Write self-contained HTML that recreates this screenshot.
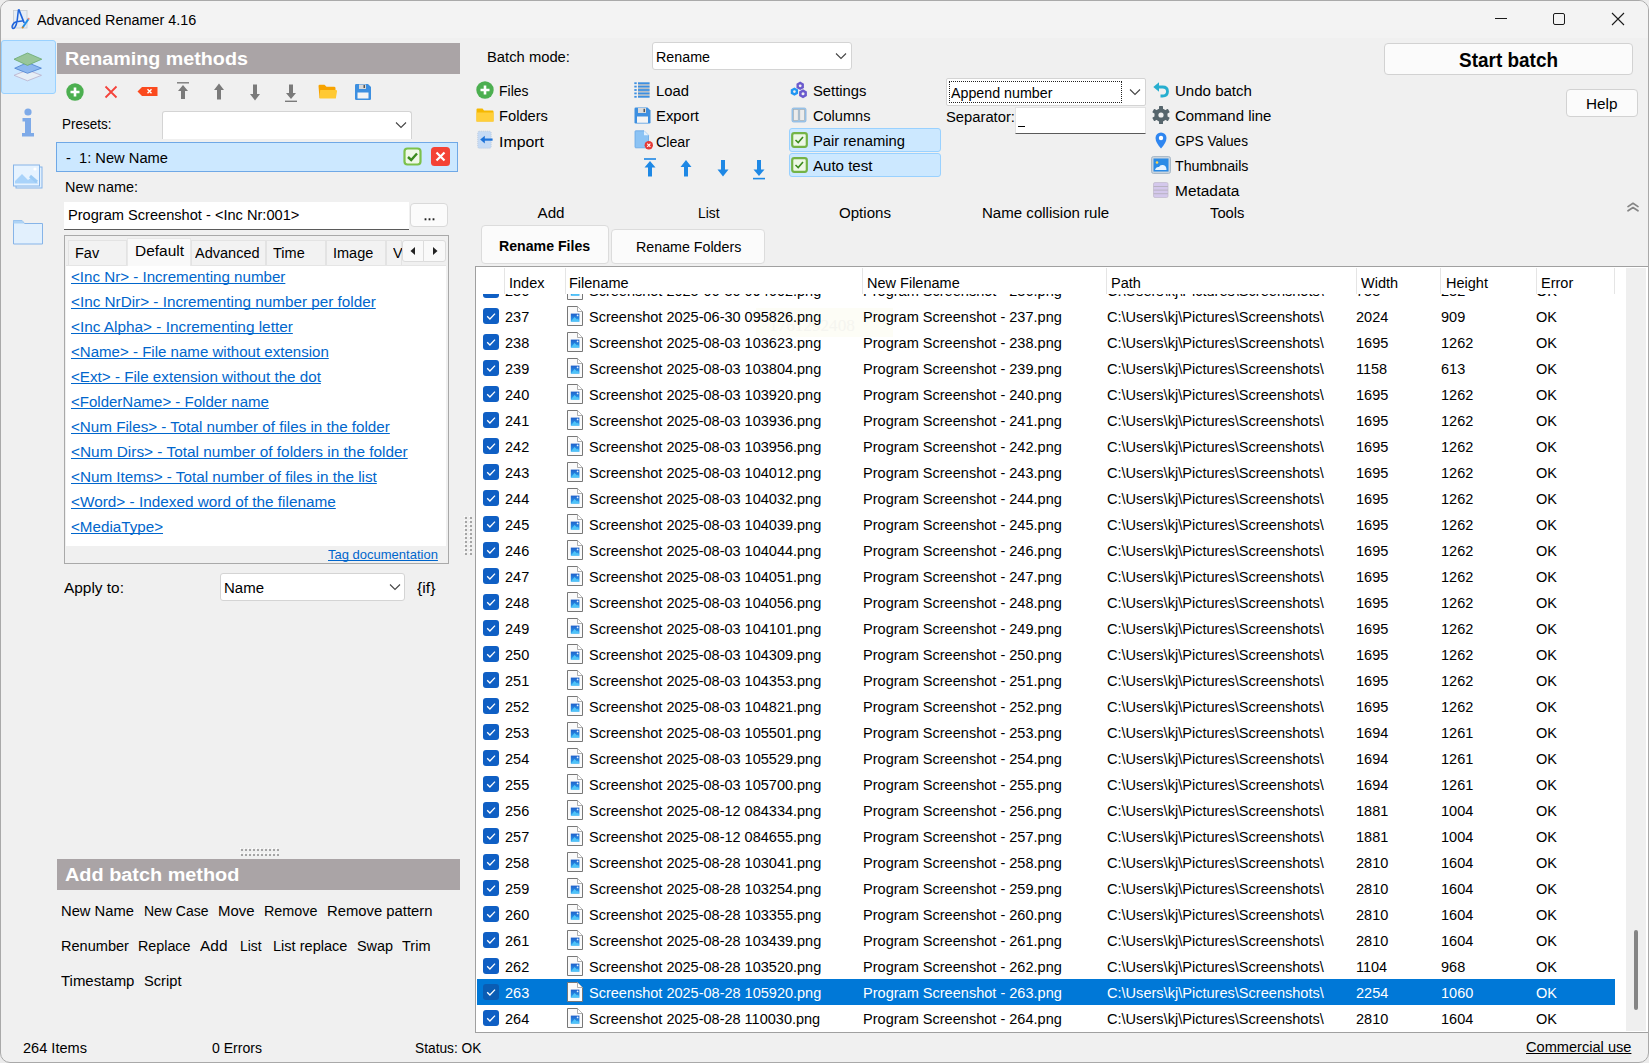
<!DOCTYPE html><html><head><meta charset="utf-8"><title>Advanced Renamer</title><style>
*{margin:0;padding:0;box-sizing:border-box}
html,body{width:1649px;height:1063px;overflow:hidden;background:#ececec}
body{font-family:"Liberation Sans",sans-serif;color:#000;position:relative}
.t{position:absolute;white-space:pre}
.b{position:absolute}
</style></head><body><div class="b" style="left:0px;top:0px;width:1649px;height:1063px;background:#f0f0f0;border:1px solid #a9a9a9;border-radius:10px;"></div>
<div class="b" style="left:1px;top:1px;width:1647px;height:37px;background:#f3f3f3;border-radius:9px 9px 0 0;"></div>
<svg class="b" style="left:6px;top:4px" width="30" height="30" viewBox="0 0 30 30"><rect x="7.5" y="6.5" width="13.5" height="17.5" fill="#e6edf5" stroke="#c9cfd6" stroke-width=".9"/><path d="M12.5 5.5 C11.8 10 11.6 14 11 17.5 C10.3 21.5 8.5 25 7 24.5 C5 23.8 6.2 18.5 11.5 17.6 C13.5 17.3 15.5 17.2 17.5 16.8" stroke="#1d63dc" stroke-width="1.5" fill="none"/><path d="M12.7 5.3 L18.2 19" stroke="#1d63dc" stroke-width="1.7" fill="none"/><path d="M16.8 23.3 L22.5 15" stroke="#1e8ee8" stroke-width="2" fill="none"/><circle cx="16.6" cy="23.6" r="1" fill="#d0891e"/><circle cx="22.6" cy="14.7" r="1" fill="#ef8a7a"/></svg>
<div class="t" style="left:37.00px;top:11.63px;font-size:15.200px;line-height:15.200px;transform:scaleX(0.9486);transform-origin:0 0;">Advanced Renamer 4.16</div>
<div class="b" style="left:1495px;top:18px;width:12px;height:1px;background:#1a1a1a"></div>
<div class="b" style="left:1553px;top:13px;width:12px;height:12px;border:1px solid #1a1a1a;border-radius:2px"></div>
<svg class="b" style="left:1611px;top:12px" width="14" height="14" viewBox="0 0 14 14"><path d="M1 1 L13 13 M13 1 L1 13" stroke="#1a1a1a" stroke-width="1.1"/></svg>
<div class="b" style="left:1px;top:40px;width:55px;height:54px;background:#cce8ff;border:1px solid #99d1ff;border-radius:3px"></div>
<svg class="b" style="left:13px;top:52px" width="30" height="30" viewBox="0 0 30 30"><path d="M1 23.3 L14.5 18 L28.5 23.3 L14.5 28.8Z" fill="#e6eef6" stroke="#b9b0cc" stroke-width=".8"/><path d="M1.7 16.2 L14.5 10.5 L28.4 16.2 L14.5 21.3Z" fill="#8db8ef" stroke="#4a7fcf" stroke-width=".8"/><path d="M1 7.2 L14.5 1 L28.8 7.2 L14.5 13.4Z" fill="#98c69a" stroke="#6aa86e" stroke-width=".8"/></svg>
<svg class="b" style="left:18px;top:106px" width="20" height="32" viewBox="0 0 20 32"><circle cx="10" cy="6" r="3.6" fill="#7eaae8"/><path d="M4.5 12 H13 V27 H16 V30.5 H4 V27 H7 V15.5 H4.5Z" fill="#7eaae8"/></svg>
<svg class="b" style="left:12px;top:164px" width="32" height="27" viewBox="0 0 32 27"><rect x="4" y="3" width="26" height="21" fill="#e2f0fd" stroke="#86b4e8" stroke-width="1"/><rect x="1.5" y="1" width="26" height="21" fill="#e6f3ff" stroke="#86b4e8" stroke-width="1"/><path d="M3 19.5 L3 17 L10 10 L16 16 L20 13 L26 19 V19.5Z" fill="#a9d3fa"/><path d="M18 12 L25 18" stroke="#9ccbf5" stroke-width="3"/><circle cx="23" cy="5" r="1.6" fill="#fff"/></svg>
<svg class="b" style="left:12px;top:219px" width="32" height="27" viewBox="0 0 32 27"><path d="M1.5 1.5 H10 L12.5 4.5 H30.5 V25 H1.5Z" fill="#e2f0fd" stroke="#86b4e8" stroke-width="1"/><path d="M1.5 1.5 H10 L12.5 4.5 H1.5Z" fill="#aed3f5"/></svg>
<div class="b" style="left:57px;top:43px;width:403px;height:31px;background:#aaa4a6"></div>
<div class="t" style="left:64.50px;top:49.67px;font-size:18.700px;line-height:18.700px;transform:scaleX(1.0547);transform-origin:0 0;color:#fff;font-weight:bold;">Renaming methods</div>
<svg class="b" style="left:66px;top:83px" width="18" height="18" viewBox="0 0 18 18"><circle cx="9" cy="9" r="8.7" fill="#4caf50"/><path d="M9 4.5 V13.5 M4.5 9 H13.5" stroke="#fff" stroke-width="2.6"/></svg>
<svg class="b" style="left:104px;top:85px" width="14" height="14" viewBox="0 0 14 14"><path d="M1.5 1.5 L12.5 12.5 M12.5 1.5 L1.5 12.5" stroke="#f4433b" stroke-width="1.8"/></svg>
<svg class="b" style="left:137px;top:86px" width="21" height="11" viewBox="0 0 21 11"><path d="M0.5 5.5 L5 1 H20.5 V10 H5Z" fill="#fb4a1e"/><path d="M10.5 3.3 L14.5 7.3 M14.5 3.3 L10.5 7.3" stroke="#fff" stroke-width="1.4"/></svg>
<svg class="b" style="left:176px;top:81px" width="14" height="20" viewBox="0 0 14 20"><path d="M1 1.8 H13" stroke="#7a7a7a" stroke-width="1.4"/><path d="M7 4 L12 10 H9 V18 H5 V10 H2Z" fill="#7a7a7a"/></svg>
<svg class="b" style="left:212px;top:82px" width="14" height="20" viewBox="0 0 14 20"><path d="M7 1.5 L12 8 H9 V17.5 H5 V8 H2Z" fill="#7a7a7a"/></svg>
<svg class="b" style="left:248px;top:82px" width="14" height="20" viewBox="0 0 14 20"><path d="M7 18.5 L12 12 H9 V2.5 H5 V12 H2Z" fill="#7a7a7a"/></svg>
<svg class="b" style="left:284px;top:82px" width="14" height="21" viewBox="0 0 14 21"><path d="M1 19.3 H13" stroke="#7a7a7a" stroke-width="1.4"/><path d="M7 17 L12 11 H9 V2.5 H5 V11 H2Z" fill="#7a7a7a"/></svg>
<svg class="b" style="left:318px;top:84px" width="20" height="16" viewBox="0 0 20 16"><path d="M0.5 2 Q0.5 0.8 1.8 0.8 H6.5 L8.5 2.8 H16 Q17.5 2.8 17.5 4 V14 H1.5Z" fill="#f7a300"/><path d="M2.2 6 H18 Q19.5 6 19 7.5 L17.8 14.5 H1.5Z" fill="#ffc933"/></svg>
<svg class="b" style="left:354px;top:83px" width="18" height="18" viewBox="0 0 18 18"><path d="M1 2.2 Q1 1 2.2 1 H14 L17 4 V15.8 Q17 17 15.8 17 H2.2 Q1 17 1 15.8Z" fill="#3d8fe0"/><rect x="5" y="1.5" width="7" height="4.5" fill="#d9d9d9"/><rect x="9.5" y="2" width="1.5" height="3" fill="#555"/><rect x="3.5" y="9.5" width="11" height="6" fill="#f4f4f4"/></svg>
<div class="t" style="left:62.00px;top:116.13px;font-size:15.200px;line-height:15.200px;transform:scaleX(0.8879);transform-origin:0 0;">Presets:</div>
<div class="b" style="left:162px;top:111px;width:250px;height:28px;background:#fff;border:1px solid #d4d4d4;border-bottom:none;border-radius:3px 3px 0 0"></div>
<svg class="b" style="left:395px;top:121px" width="12" height="8" viewBox="0 0 12 8"><path d="M1 1.5 L6 6.5 L11 1.5" stroke="#444" stroke-width="1.1" fill="none"/></svg>
<div class="b" style="left:56px;top:142px;width:402px;height:30px;background:#cce8ff;border:1px solid #6fa8e6"></div>
<div class="t" style="left:66.00px;top:150.13px;font-size:15.200px;line-height:15.200px;transform:scaleX(0.9661);transform-origin:0 0;">-  1: New Name</div>
<svg class="b" style="left:403px;top:147px" width="19" height="19" viewBox="0 0 19 19"><rect x="1.5" y="1.5" width="16" height="16" rx="3" fill="#f0f8e8" stroke="#7cc14a" stroke-width="2.2"/><path d="M5 10 L8.2 13 L14 6.5" stroke="#3b8a1e" stroke-width="2.4" fill="none"/></svg>
<svg class="b" style="left:431px;top:147px" width="19" height="19" viewBox="0 0 19 19"><rect x="0" y="0" width="19" height="19" rx="3.5" fill="#f44336"/><path d="M5.5 5.5 L13.5 13.5 M13.5 5.5 L5.5 13.5" stroke="#fff" stroke-width="2.2"/></svg>
<div class="t" style="left:64.50px;top:178.93px;font-size:15.200px;line-height:15.200px;transform:scaleX(0.9496);transform-origin:0 0;">New name:</div>
<div class="b" style="left:64px;top:202px;width:345px;height:28px;background:#fff;border-bottom:1.5px solid #5a5a5a"></div>
<div class="t" style="left:67.50px;top:207.43px;font-size:15.200px;line-height:15.200px;transform:scaleX(0.9615);transform-origin:0 0;">Program Screenshot - &lt;Inc Nr:001&gt;</div>
<div class="b" style="left:410px;top:203px;width:38px;height:24px;background:#fbfbfb;border:1px solid #d9d9d9;border-radius:4px"></div>
<svg class="b" style="left:424px;top:218px" width="12" height="3" viewBox="0 0 12 3"><rect x="0.6" y="0.3" width="1.8" height="2" fill="#222"/><rect x="4.6" y="0.3" width="1.8" height="2" fill="#222"/><rect x="8.6" y="0.3" width="1.8" height="2" fill="#222"/></svg>
<div class="b" style="left:64px;top:235px;width:385px;height:329px;border:1px solid #a9a9a9"></div>
<div class="b" style="left:66px;top:265px;width:380px;height:281px;background:#fff;border-top:1px solid #e5e5e5"></div>
<div class="b" style="left:68px;top:240px;width:59px;height:25px;background:#f2f2f2;border:1px solid #e3e3e3;border-bottom:none"></div>
<div class="t" style="left:74.50px;top:244.83px;font-size:15.200px;line-height:15.200px;transform:scaleX(0.9550);transform-origin:0 0;">Fav</div>
<div class="b" style="left:127px;top:238px;width:64px;height:28px;background:#f9f9f9;border:1px solid #e8e8e8;border-bottom:none"></div>
<div class="t" style="left:134.60px;top:242.83px;font-size:15.200px;line-height:15.200px;transform:scaleX(1.0175);transform-origin:0 0;">Default</div>
<div class="b" style="left:191px;top:240px;width:75px;height:25px;background:#f2f2f2;border:1px solid #e3e3e3;border-bottom:none"></div>
<div class="t" style="left:195.20px;top:244.83px;font-size:15.200px;line-height:15.200px;transform:scaleX(0.9550);transform-origin:0 0;">Advanced</div>
<div class="b" style="left:266px;top:240px;width:60px;height:25px;background:#f2f2f2;border:1px solid #e3e3e3;border-bottom:none"></div>
<div class="t" style="left:273.10px;top:244.83px;font-size:15.200px;line-height:15.200px;transform:scaleX(0.9550);transform-origin:0 0;">Time</div>
<div class="b" style="left:326px;top:240px;width:60px;height:25px;background:#f2f2f2;border:1px solid #e3e3e3;border-bottom:none"></div>
<div class="t" style="left:333.40px;top:244.83px;font-size:15.200px;line-height:15.200px;transform:scaleX(0.9550);transform-origin:0 0;">Image</div>
<div class="b" style="left:386px;top:240px;width:16px;height:25px;background:#f2f2f2;border:1px solid #e3e3e3;border-bottom:none"></div>
<div class="b" style="left:386px;top:240px;width:16px;height:25px;overflow:hidden">
<div class="t" style="left:6.80px;top:4.83px;font-size:15.200px;line-height:15.200px;transform:scaleX(0.9550);transform-origin:0 0;">V</div>
</div>
<div class="b" style="left:402px;top:240px;width:22px;height:22px;background:#f9f9f9;border:1px solid #dcdcdc;border-radius:3px 0 0 3px"></div>
<div class="b" style="left:423px;top:240px;width:23px;height:22px;background:#f9f9f9;border:1px solid #dcdcdc;border-radius:0 3px 3px 0"></div>
<svg class="b" style="left:409px;top:246px" width="8" height="10" viewBox="0 0 8 10"><path d="M6 1 V9 L1.5 5Z" fill="#222"/></svg>
<svg class="b" style="left:431px;top:246px" width="8" height="10" viewBox="0 0 8 10"><path d="M2 1 V9 L6.5 5Z" fill="#222"/></svg>
<div class="t" style="left:71.00px;top:268.63px;font-size:15.200px;line-height:15.200px;transform:scaleX(0.9958);transform-origin:0 0;color:#0066cc;text-decoration:underline;text-underline-offset:1px;text-decoration-skip-ink:none">&lt;Inc Nr&gt; - Incrementing number</div>
<div class="t" style="left:71.00px;top:293.63px;font-size:15.200px;line-height:15.200px;transform:scaleX(1.0057);transform-origin:0 0;color:#0066cc;text-decoration:underline;text-underline-offset:1px;text-decoration-skip-ink:none">&lt;Inc NrDir&gt; - Incrementing number per folder</div>
<div class="t" style="left:71.00px;top:318.63px;font-size:15.200px;line-height:15.200px;transform:scaleX(1.0106);transform-origin:0 0;color:#0066cc;text-decoration:underline;text-underline-offset:1px;text-decoration-skip-ink:none">&lt;Inc Alpha&gt; - Incrementing letter</div>
<div class="t" style="left:71.00px;top:343.63px;font-size:15.200px;line-height:15.200px;transform:scaleX(0.9915);transform-origin:0 0;color:#0066cc;text-decoration:underline;text-underline-offset:1px;text-decoration-skip-ink:none">&lt;Name&gt; - File name without extension</div>
<div class="t" style="left:71.00px;top:368.63px;font-size:15.200px;line-height:15.200px;color:#0066cc;text-decoration:underline;text-underline-offset:1px;text-decoration-skip-ink:none">&lt;Ext&gt; - File extension without the dot</div>
<div class="t" style="left:71.00px;top:393.63px;font-size:15.200px;line-height:15.200px;transform:scaleX(0.9890);transform-origin:0 0;color:#0066cc;text-decoration:underline;text-underline-offset:1px;text-decoration-skip-ink:none">&lt;FolderName&gt; - Folder name</div>
<div class="t" style="left:71.00px;top:418.63px;font-size:15.200px;line-height:15.200px;color:#0066cc;text-decoration:underline;text-underline-offset:1px;text-decoration-skip-ink:none">&lt;Num Files&gt; - Total number of files in the folder</div>
<div class="t" style="left:71.00px;top:443.63px;font-size:15.200px;line-height:15.200px;transform:scaleX(1.0133);transform-origin:0 0;color:#0066cc;text-decoration:underline;text-underline-offset:1px;text-decoration-skip-ink:none">&lt;Num Dirs&gt; - Total number of folders in the folder</div>
<div class="t" style="left:71.00px;top:468.63px;font-size:15.200px;line-height:15.200px;transform:scaleX(1.0044);transform-origin:0 0;color:#0066cc;text-decoration:underline;text-underline-offset:1px;text-decoration-skip-ink:none">&lt;Num Items&gt; - Total number of files in the list</div>
<div class="t" style="left:71.00px;top:493.63px;font-size:15.200px;line-height:15.200px;transform:scaleX(1.0096);transform-origin:0 0;color:#0066cc;text-decoration:underline;text-underline-offset:1px;text-decoration-skip-ink:none">&lt;Word&gt; - Indexed word of the filename</div>
<div class="t" style="left:71.00px;top:518.63px;font-size:15.200px;line-height:15.200px;color:#0066cc;text-decoration:underline;text-underline-offset:1px;text-decoration-skip-ink:none">&lt;MediaType&gt;</div>
<div class="t" style="left:328.00px;top:549.15px;font-size:12.700px;line-height:12.700px;transform:scaleX(1.0251);transform-origin:0 0;color:#0066cc;text-decoration:underline;text-decoration-skip-ink:none">Tag documentation</div>
<div class="t" style="left:64.20px;top:580.13px;font-size:15.200px;line-height:15.200px;transform:scaleX(1.0145);transform-origin:0 0;">Apply to:</div>
<div class="b" style="left:220px;top:573px;width:185px;height:28px;background:#fff;border:1px solid #d4d4d4;border-radius:3px"></div>
<div class="t" style="left:224.00px;top:580.13px;font-size:15.200px;line-height:15.200px;transform:scaleX(0.9866);transform-origin:0 0;">Name</div>
<svg class="b" style="left:389px;top:583px" width="12" height="8" viewBox="0 0 12 8"><path d="M1 1.5 L6 6.5 L11 1.5" stroke="#444" stroke-width="1.1" fill="none"/></svg>
<div class="t" style="left:417.20px;top:580.13px;font-size:15.200px;line-height:15.200px;transform:scaleX(1.0419);transform-origin:0 0;">{if}</div>
<svg class="b" style="left:464px;top:516px" width="9" height="40" viewBox="0 0 9 40"><rect x="1" y="1" width="2" height="2" fill="#a5a5a5"/><rect x="0" y="0" width="1" height="1" fill="#fff"/><rect x="1" y="5" width="2" height="2" fill="#a5a5a5"/><rect x="0" y="4" width="1" height="1" fill="#fff"/><rect x="1" y="9" width="2" height="2" fill="#a5a5a5"/><rect x="0" y="8" width="1" height="1" fill="#fff"/><rect x="1" y="13" width="2" height="2" fill="#a5a5a5"/><rect x="0" y="12" width="1" height="1" fill="#fff"/><rect x="1" y="17" width="2" height="2" fill="#a5a5a5"/><rect x="0" y="16" width="1" height="1" fill="#fff"/><rect x="1" y="21" width="2" height="2" fill="#a5a5a5"/><rect x="0" y="20" width="1" height="1" fill="#fff"/><rect x="1" y="25" width="2" height="2" fill="#a5a5a5"/><rect x="0" y="24" width="1" height="1" fill="#fff"/><rect x="1" y="29" width="2" height="2" fill="#a5a5a5"/><rect x="0" y="28" width="1" height="1" fill="#fff"/><rect x="1" y="33" width="2" height="2" fill="#a5a5a5"/><rect x="0" y="32" width="1" height="1" fill="#fff"/><rect x="1" y="37" width="2" height="2" fill="#a5a5a5"/><rect x="0" y="36" width="1" height="1" fill="#fff"/><rect x="6" y="1" width="2" height="2" fill="#a5a5a5"/><rect x="5" y="0" width="1" height="1" fill="#fff"/><rect x="6" y="5" width="2" height="2" fill="#a5a5a5"/><rect x="5" y="4" width="1" height="1" fill="#fff"/><rect x="6" y="9" width="2" height="2" fill="#a5a5a5"/><rect x="5" y="8" width="1" height="1" fill="#fff"/><rect x="6" y="13" width="2" height="2" fill="#a5a5a5"/><rect x="5" y="12" width="1" height="1" fill="#fff"/><rect x="6" y="17" width="2" height="2" fill="#a5a5a5"/><rect x="5" y="16" width="1" height="1" fill="#fff"/><rect x="6" y="21" width="2" height="2" fill="#a5a5a5"/><rect x="5" y="20" width="1" height="1" fill="#fff"/><rect x="6" y="25" width="2" height="2" fill="#a5a5a5"/><rect x="5" y="24" width="1" height="1" fill="#fff"/><rect x="6" y="29" width="2" height="2" fill="#a5a5a5"/><rect x="5" y="28" width="1" height="1" fill="#fff"/><rect x="6" y="33" width="2" height="2" fill="#a5a5a5"/><rect x="5" y="32" width="1" height="1" fill="#fff"/><rect x="6" y="37" width="2" height="2" fill="#a5a5a5"/><rect x="5" y="36" width="1" height="1" fill="#fff"/></svg>
<svg class="b" style="left:240px;top:848px" width="42" height="9" viewBox="0 0 42 9"><rect x="1" y="1" width="2" height="2" fill="#a5a5a5"/><rect x="0" y="0" width="1" height="1" fill="#fff"/><rect x="1" y="6" width="2" height="2" fill="#a5a5a5"/><rect x="0" y="5" width="1" height="1" fill="#fff"/><rect x="5" y="1" width="2" height="2" fill="#a5a5a5"/><rect x="4" y="0" width="1" height="1" fill="#fff"/><rect x="5" y="6" width="2" height="2" fill="#a5a5a5"/><rect x="4" y="5" width="1" height="1" fill="#fff"/><rect x="9" y="1" width="2" height="2" fill="#a5a5a5"/><rect x="8" y="0" width="1" height="1" fill="#fff"/><rect x="9" y="6" width="2" height="2" fill="#a5a5a5"/><rect x="8" y="5" width="1" height="1" fill="#fff"/><rect x="13" y="1" width="2" height="2" fill="#a5a5a5"/><rect x="12" y="0" width="1" height="1" fill="#fff"/><rect x="13" y="6" width="2" height="2" fill="#a5a5a5"/><rect x="12" y="5" width="1" height="1" fill="#fff"/><rect x="17" y="1" width="2" height="2" fill="#a5a5a5"/><rect x="16" y="0" width="1" height="1" fill="#fff"/><rect x="17" y="6" width="2" height="2" fill="#a5a5a5"/><rect x="16" y="5" width="1" height="1" fill="#fff"/><rect x="21" y="1" width="2" height="2" fill="#a5a5a5"/><rect x="20" y="0" width="1" height="1" fill="#fff"/><rect x="21" y="6" width="2" height="2" fill="#a5a5a5"/><rect x="20" y="5" width="1" height="1" fill="#fff"/><rect x="25" y="1" width="2" height="2" fill="#a5a5a5"/><rect x="24" y="0" width="1" height="1" fill="#fff"/><rect x="25" y="6" width="2" height="2" fill="#a5a5a5"/><rect x="24" y="5" width="1" height="1" fill="#fff"/><rect x="29" y="1" width="2" height="2" fill="#a5a5a5"/><rect x="28" y="0" width="1" height="1" fill="#fff"/><rect x="29" y="6" width="2" height="2" fill="#a5a5a5"/><rect x="28" y="5" width="1" height="1" fill="#fff"/><rect x="33" y="1" width="2" height="2" fill="#a5a5a5"/><rect x="32" y="0" width="1" height="1" fill="#fff"/><rect x="33" y="6" width="2" height="2" fill="#a5a5a5"/><rect x="32" y="5" width="1" height="1" fill="#fff"/><rect x="37" y="1" width="2" height="2" fill="#a5a5a5"/><rect x="36" y="0" width="1" height="1" fill="#fff"/><rect x="37" y="6" width="2" height="2" fill="#a5a5a5"/><rect x="36" y="5" width="1" height="1" fill="#fff"/></svg>
<div class="b" style="left:57px;top:859px;width:403px;height:31px;background:#aaa4a6"></div>
<div class="t" style="left:64.50px;top:865.87px;font-size:18.700px;line-height:18.700px;transform:scaleX(1.0632);transform-origin:0 0;color:#fff;font-weight:bold;">Add batch method</div>
<div class="t" style="left:61.30px;top:902.93px;font-size:15.200px;line-height:15.200px;transform:scaleX(0.9711);transform-origin:0 0;">New Name</div>
<div class="t" style="left:143.90px;top:902.93px;font-size:15.200px;line-height:15.200px;transform:scaleX(0.9200);transform-origin:0 0;">New Case</div>
<div class="t" style="left:218.00px;top:902.93px;font-size:15.200px;line-height:15.200px;transform:scaleX(0.9821);transform-origin:0 0;">Move</div>
<div class="t" style="left:264.20px;top:902.93px;font-size:15.200px;line-height:15.200px;transform:scaleX(0.9453);transform-origin:0 0;">Remove</div>
<div class="t" style="left:327.20px;top:902.93px;font-size:15.200px;line-height:15.200px;transform:scaleX(0.9756);transform-origin:0 0;">Remove pattern</div>
<div class="t" style="left:61.30px;top:937.93px;font-size:15.200px;line-height:15.200px;transform:scaleX(0.9583);transform-origin:0 0;">Renumber</div>
<div class="t" style="left:138.20px;top:937.93px;font-size:15.200px;line-height:15.200px;transform:scaleX(0.9415);transform-origin:0 0;">Replace</div>
<div class="t" style="left:200.00px;top:937.93px;font-size:15.200px;line-height:15.200px;transform:scaleX(1.0169);transform-origin:0 0;">Add</div>
<div class="t" style="left:240.20px;top:937.93px;font-size:15.200px;line-height:15.200px;transform:scaleX(0.9090);transform-origin:0 0;">List</div>
<div class="t" style="left:273.00px;top:937.93px;font-size:15.200px;line-height:15.200px;transform:scaleX(0.9585);transform-origin:0 0;">List replace</div>
<div class="t" style="left:357.00px;top:937.93px;font-size:15.200px;line-height:15.200px;transform:scaleX(0.9468);transform-origin:0 0;">Swap</div>
<div class="t" style="left:401.80px;top:937.93px;font-size:15.200px;line-height:15.200px;transform:scaleX(0.9557);transform-origin:0 0;">Trim</div>
<div class="t" style="left:61.30px;top:972.93px;font-size:15.200px;line-height:15.200px;transform:scaleX(0.9852);transform-origin:0 0;">Timestamp</div>
<div class="t" style="left:143.90px;top:972.93px;font-size:15.200px;line-height:15.200px;transform:scaleX(0.9652);transform-origin:0 0;">Script</div>
<div class="t" style="left:22.80px;top:1040.13px;font-size:15.200px;line-height:15.200px;transform:scaleX(0.9589);transform-origin:0 0;">264 Items</div>
<div class="t" style="left:212.30px;top:1040.13px;font-size:15.200px;line-height:15.200px;transform:scaleX(0.9251);transform-origin:0 0;">0 Errors</div>
<div class="t" style="left:414.60px;top:1040.13px;font-size:15.200px;line-height:15.200px;transform:scaleX(0.9048);transform-origin:0 0;">Status: OK</div>
<div class="t" style="left:1526.00px;top:1039.33px;font-size:15.200px;line-height:15.200px;transform:scaleX(0.9608);transform-origin:0 0;text-decoration:underline;text-decoration-skip-ink:none">Commercial use</div>
<div class="t" style="left:486.50px;top:48.63px;font-size:15.200px;line-height:15.200px;transform:scaleX(0.9727);transform-origin:0 0;">Batch mode:</div>
<div class="b" style="left:652px;top:42px;width:200px;height:28px;background:#fff;border:1px solid #d4d4d4;border-radius:3px"></div>
<div class="t" style="left:656.30px;top:48.63px;font-size:15.200px;line-height:15.200px;transform:scaleX(0.9400);transform-origin:0 0;">Rename</div>
<svg class="b" style="left:835px;top:52px" width="12" height="8" viewBox="0 0 12 8"><path d="M1 1.5 L6 6.5 L11 1.5" stroke="#444" stroke-width="1.1" fill="none"/></svg>
<svg class="b" style="left:476px;top:81px" width="18" height="18" viewBox="0 0 18 18"><circle cx="9" cy="9" r="8.7" fill="#4caf50"/><path d="M9 4.5 V13.5 M4.5 9 H13.5" stroke="#fff" stroke-width="2.6"/></svg>
<div class="t" style="left:499.10px;top:82.53px;font-size:15.200px;line-height:15.200px;transform:scaleX(0.9193);transform-origin:0 0;">Files</div>
<svg class="b" style="left:476px;top:108px" width="18" height="14" viewBox="0 0 18 14"><path d="M0.5 1.5 Q0.5 0.5 1.5 0.5 H6.5 L8 2.5 H16.5 Q17.5 2.5 17.5 3.5 V13.5 H0.5Z" fill="#f5b800"/><path d="M0.5 4.5 H17.5 V13.5 H0.5Z" fill="#ffcf3a"/></svg>
<div class="t" style="left:499.10px;top:108.13px;font-size:15.200px;line-height:15.200px;transform:scaleX(0.9668);transform-origin:0 0;">Folders</div>
<svg class="b" style="left:476px;top:130px" width="18" height="20" viewBox="0 0 18 20"><rect x="1.7" y="1.2" width="13.5" height="17" rx="1.5" fill="#c6dbf5" stroke="#aebfd3" stroke-width=".6" stroke-dasharray="1 1"/><path d="M16.6 9.6 H7" stroke="#1e73d9" stroke-width="2.2"/><path d="M4.2 9.6 L8.8 5.8 V13.4Z" fill="#1e73d9"/></svg>
<div class="t" style="left:499.10px;top:133.53px;font-size:15.200px;line-height:15.200px;transform:scaleX(1.0447);transform-origin:0 0;">Import</div>
<svg class="b" style="left:634px;top:82px" width="17" height="16" viewBox="0 0 17 16"><rect x="4" y="2.0" width="11.6" height="1.7" fill="#b9bec4"/><rect x="4" y="5.4" width="11.6" height="1.7" fill="#b9bec4"/><rect x="4" y="8.8" width="11.6" height="1.7" fill="#b9bec4"/><rect x="4" y="12.2" width="11.6" height="1.7" fill="#b9bec4"/><rect x="0.3" y="0.3" width="2.4" height="1.8" fill="#3d8fe0"/><rect x="4" y="0.3" width="11.6" height="1.8" fill="#3d8fe0"/><rect x="0.3" y="3.7" width="2.4" height="1.8" fill="#3d8fe0"/><rect x="4" y="3.7" width="11.6" height="1.8" fill="#3d8fe0"/><rect x="0.3" y="7.1" width="2.4" height="1.8" fill="#3d8fe0"/><rect x="4" y="7.1" width="11.6" height="1.8" fill="#3d8fe0"/><rect x="0.3" y="10.5" width="2.4" height="1.8" fill="#3d8fe0"/><rect x="4" y="10.5" width="11.6" height="1.8" fill="#3d8fe0"/><rect x="0.3" y="13.9" width="2.4" height="1.8" fill="#3d8fe0"/><rect x="4" y="13.9" width="11.6" height="1.8" fill="#3d8fe0"/></svg>
<div class="t" style="left:656.30px;top:82.53px;font-size:15.200px;line-height:15.200px;transform:scaleX(0.9760);transform-origin:0 0;">Load</div>
<svg class="b" style="left:634px;top:107px" width="17" height="17" viewBox="0 0 17 17"><path d="M0.5 1.8 Q0.5 0.5 1.8 0.5 H13.5 L16.5 3.5 V15.2 Q16.5 16.5 15.2 16.5 H1.8 Q0.5 16.5 0.5 15.2Z" fill="#3d8fe0"/><rect x="4" y="1" width="8" height="5" fill="#dcdcdc"/><rect x="9.5" y="1.8" width="1.5" height="3.3" fill="#555"/><rect x="3" y="9.5" width="11" height="6.3" fill="#f4f4f4"/></svg>
<div class="t" style="left:656.30px;top:108.13px;font-size:15.200px;line-height:15.200px;transform:scaleX(0.9789);transform-origin:0 0;">Export</div>
<svg class="b" style="left:634px;top:130px" width="20" height="20" viewBox="0 0 20 20"><path d="M1 1.5 Q1 0.8 1.7 0.8 H10 L14.5 5.3 V17 Q14.5 17.8 13.8 17.8 H1.7 Q1 17.8 1 17Z" fill="#8cc3f4" stroke="#64a6e6" stroke-width=".8"/><path d="M10 0.8 V5.3 H14.5" fill="#e5f1fd"/><circle cx="14.8" cy="15.2" r="4.2" fill="#e53935"/><path d="M13.2 13.6 L16.4 16.8 M16.4 13.6 L13.2 16.8" stroke="#fff" stroke-width="1.1"/></svg>
<div class="t" style="left:656.30px;top:133.53px;font-size:15.200px;line-height:15.200px;transform:scaleX(0.9361);transform-origin:0 0;">Clear</div>
<svg class="b" style="left:643px;top:158px" width="14" height="20" viewBox="0 0 14 20"><path d="M1 1 H13" stroke="#1e88e5" stroke-width="1.6"/><path d="M7 3 L12.5 9.5 H9 V18.5 H5 V9.5 H1.5Z" fill="#1e88e5"/></svg>
<svg class="b" style="left:680px;top:159px" width="12" height="18" viewBox="0 0 12 18"><path d="M6 1 L11.5 8 H8 V17.5 H4 V8 H0.5Z" fill="#1e88e5"/></svg>
<svg class="b" style="left:717px;top:159px" width="12" height="18" viewBox="0 0 12 18"><path d="M6 17.5 L11.5 10.5 H8 V1 H4 V10.5 H0.5Z" fill="#1e88e5"/></svg>
<svg class="b" style="left:752px;top:159px" width="14" height="21" viewBox="0 0 14 21"><path d="M1 19.6 H13" stroke="#1e88e5" stroke-width="1.6"/><path d="M7 17 L12.5 10.5 H9 V1 H5 V10.5 H1.5Z" fill="#1e88e5"/></svg>
<svg class="b" style="left:784px;top:78px" width="26" height="24" viewBox="0 0 26 24"><path d="M10.40 17.80 L6.76 15.70 L6.76 11.50 L10.40 9.40 L14.04 11.50 L14.04 15.70Z" fill="#2196f3"/><circle cx="10.4" cy="13.6" r="1.3" fill="#f0f0f0"/><path d="M16.20 12.10 L12.48 9.95 L12.48 5.65 L16.20 3.50 L19.92 5.65 L19.92 9.95Z" fill="#6a5acd"/><circle cx="16.2" cy="7.8" r="1.4" fill="#f0f0f0"/><path d="M19.00 20.30 L15.10 18.05 L15.10 13.55 L19.00 11.30 L22.90 13.55 L22.90 18.05Z" fill="#6a5acd"/><circle cx="19" cy="15.8" r="1.5" fill="#f0f0f0"/></svg>
<div class="t" style="left:813.20px;top:82.53px;font-size:15.200px;line-height:15.200px;transform:scaleX(0.9742);transform-origin:0 0;">Settings</div>
<svg class="b" style="left:791px;top:107px" width="16" height="16" viewBox="0 0 16 16"><rect x="1" y="1" width="14" height="14" rx="1.5" fill="#9ccbf3" stroke="#8ab3d9" stroke-width=".8"/><rect x="2.6" y="2.6" width="4.6" height="10.8" fill="#ececec" stroke="#a9a9a9" stroke-width=".6"/><rect x="8.8" y="2.6" width="4.6" height="10.8" fill="#ececec" stroke="#a9a9a9" stroke-width=".6"/></svg>
<div class="t" style="left:813.20px;top:108.13px;font-size:15.200px;line-height:15.200px;transform:scaleX(0.9588);transform-origin:0 0;">Columns</div>
<div class="b" style="left:789px;top:128px;width:152px;height:24px;background:#cce8ff;border:1px solid #99d1ff;border-radius:3px"></div>
<svg class="b" style="left:791px;top:132px" width="17" height="16" viewBox="0 0 17 16"><rect x="1.2" y="1.2" width="14.6" height="13.6" rx="2" fill="#eef7e6" stroke="#74b346" stroke-width="2.2"/><path d="M4.5 8 L7.2 10.5 L12 5" stroke="#3b8a1e" stroke-width="1.6" fill="none"/></svg>
<div class="t" style="left:813.40px;top:132.93px;font-size:15.200px;line-height:15.200px;transform:scaleX(0.9724);transform-origin:0 0;">Pair renaming</div>
<div class="b" style="left:789px;top:153px;width:152px;height:24px;background:#cce8ff;border:1px solid #99d1ff;border-radius:3px"></div>
<svg class="b" style="left:791px;top:157px" width="17" height="16" viewBox="0 0 17 16"><rect x="1.2" y="1.2" width="14.6" height="13.6" rx="2" fill="#eef7e6" stroke="#74b346" stroke-width="2.2"/><path d="M4.5 8 L7.2 10.5 L12 5" stroke="#3b8a1e" stroke-width="1.6" fill="none"/></svg>
<div class="t" style="left:813.40px;top:157.93px;font-size:15.200px;line-height:15.200px;transform:scaleX(0.9919);transform-origin:0 0;">Auto test</div>
<div class="b" style="left:946px;top:78px;width:200px;height:28px;background:#fff;border:1px solid #d4d4d4;border-radius:2px"></div>
<div class="b" style="left:949px;top:81px;width:173px;height:22px;border:1px dotted #222"></div>
<div class="t" style="left:950.60px;top:84.63px;font-size:15.200px;line-height:15.200px;transform:scaleX(0.9384);transform-origin:0 0;">Append number</div>
<svg class="b" style="left:1129px;top:88px" width="12" height="8" viewBox="0 0 12 8"><path d="M1 1.5 L6 6.5 L11 1.5" stroke="#444" stroke-width="1.1" fill="none"/></svg>
<div class="t" style="left:946.30px;top:108.63px;font-size:15.200px;line-height:15.200px;transform:scaleX(0.9722);transform-origin:0 0;">Separator:</div>
<div class="b" style="left:1015px;top:107px;width:131px;height:27px;background:#fff;border:1px solid #e3e3e3;border-bottom:1.5px solid #5a5a5a"></div>
<div class="b" style="left:1018px;top:126px;width:7px;height:1.3px;background:#000"></div>
<svg class="b" style="left:1153px;top:82px" width="17" height="16" viewBox="0 0 17 16"><path d="M4 5 H9.5 Q14.5 5 14.5 9.5 Q14.5 14 9.5 14 H7.5" stroke="#27aecf" stroke-width="2.8" fill="none"/><path d="M0.3 5 L6 0.3 V9.7Z" fill="#27aecf"/></svg>
<div class="t" style="left:1175.40px;top:83.33px;font-size:15.200px;line-height:15.200px;transform:scaleX(0.9905);transform-origin:0 0;">Undo batch</div>
<svg class="b" style="left:1151px;top:106px" width="20" height="18" viewBox="0 0 20 18"><g transform="translate(10,9)"><circle r="6.6" fill="#56656c"/><rect x="-2" y="-9" width="4" height="4" rx=".6" fill="#56656c" transform="rotate(0)"/><rect x="-2" y="-9" width="4" height="4" rx=".6" fill="#56656c" transform="rotate(60)"/><rect x="-2" y="-9" width="4" height="4" rx=".6" fill="#56656c" transform="rotate(120)"/><rect x="-2" y="-9" width="4" height="4" rx=".6" fill="#56656c" transform="rotate(180)"/><rect x="-2" y="-9" width="4" height="4" rx=".6" fill="#56656c" transform="rotate(240)"/><rect x="-2" y="-9" width="4" height="4" rx=".6" fill="#56656c" transform="rotate(300)"/><circle r="2.6" fill="#f0f0f0"/></g></svg>
<div class="t" style="left:1175.40px;top:108.03px;font-size:15.200px;line-height:15.200px;transform:scaleX(0.9848);transform-origin:0 0;">Command line</div>
<svg class="b" style="left:1155px;top:132px" width="12" height="17" viewBox="0 0 12 17"><path d="M6 16.5 C3 13 0.5 9.5 0.5 6 A5.5 5.5 0 0 1 11.5 6 C11.5 9.5 9 13 6 16.5Z" fill="#2f86f0"/><circle cx="6" cy="6" r="2.2" fill="#fff"/></svg>
<div class="t" style="left:1175.40px;top:132.73px;font-size:15.200px;line-height:15.200px;transform:scaleX(0.8939);transform-origin:0 0;">GPS Values</div>
<svg class="b" style="left:1151px;top:156px" width="20" height="18" viewBox="0 0 20 18"><rect x="0.5" y="0.5" width="19" height="17" rx="2" fill="#c9d3dd" stroke="#9db0c2" stroke-width=".8"/><rect x="2.5" y="2.5" width="15" height="13" fill="#2b8be6"/><circle cx="6" cy="6.5" r="1.3" fill="#ffd54f"/><path d="M4 14 Q5 10.5 8 11 Q9 8.5 12 9 Q15.5 9.5 15.5 14Z" fill="#e6f3ff"/></svg>
<div class="t" style="left:1175.40px;top:157.63px;font-size:15.200px;line-height:15.200px;transform:scaleX(0.9356);transform-origin:0 0;">Thumbnails</div>
<svg class="b" style="left:1153px;top:182px" width="16" height="16" viewBox="0 0 16 16"><rect x="0.5" y="0.5" width="14.5" height="15" rx="1.5" fill="#d4c8ec" stroke="#c4bccf" stroke-width=".8"/><rect x="0.5" y="4" width="14.5" height="1" fill="#b8b2c2"/><rect x="0.5" y="7.6" width="14.5" height="1" fill="#b8b2c2"/><rect x="0.5" y="11.2" width="14.5" height="1" fill="#b8b2c2"/></svg>
<div class="t" style="left:1175.40px;top:182.73px;font-size:15.200px;line-height:15.200px;transform:scaleX(1.0178);transform-origin:0 0;">Metadata</div>
<div class="t" style="left:537.50px;top:205.13px;font-size:15.200px;line-height:15.200px;">Add</div>
<div class="t" style="left:697.50px;top:205.13px;font-size:15.200px;line-height:15.200px;transform:scaleX(0.9090);transform-origin:0 0;">List</div>
<div class="t" style="left:839.20px;top:205.13px;font-size:15.200px;line-height:15.200px;transform:scaleX(0.9927);transform-origin:0 0;">Options</div>
<div class="t" style="left:982.20px;top:204.83px;font-size:15.200px;line-height:15.200px;transform:scaleX(0.9914);transform-origin:0 0;">Name collision rule</div>
<div class="t" style="left:1209.70px;top:204.83px;font-size:15.200px;line-height:15.200px;transform:scaleX(0.9723);transform-origin:0 0;">Tools</div>
<svg class="b" style="left:1626px;top:200px" width="14" height="14" viewBox="0 0 14 14"><path d="M2 6.6 L7 3.3 L12 6.6 M2 10.8 L7 7.5 L12 10.8" stroke="#858585" stroke-width="1.7" fill="none" stroke-linecap="round" stroke-linejoin="round"/></svg>
<div class="b" style="left:1384px;top:43px;width:249px;height:32px;background:#fbfbfb;border:1px solid #d2d2d2;border-radius:4px"></div>
<div class="t" style="left:1459.00px;top:50.79px;font-size:19.500px;line-height:19.500px;transform:scaleX(0.9721);transform-origin:0 0;font-weight:bold;">Start batch</div>
<div class="b" style="left:1566px;top:89px;width:72px;height:28px;background:#fbfbfb;border:1px solid #d2d2d2;border-radius:4px"></div>
<div class="t" style="left:1585.50px;top:95.63px;font-size:15.200px;line-height:15.200px;transform:scaleX(1.0077);transform-origin:0 0;">Help</div>
<div class="b" style="left:611px;top:229px;width:154px;height:35px;background:#fbfbfb;border:1px solid #dcdcdc;border-radius:4px"></div>
<div class="t" style="left:635.80px;top:239.43px;font-size:15.200px;line-height:15.200px;transform:scaleX(0.9381);transform-origin:0 0;">Rename Folders</div>
<div class="b" style="left:481px;top:225px;width:128px;height:39px;background:#fbfbfb;border:1px solid #dcdcdc;border-radius:4px"></div>
<div class="t" style="left:498.60px;top:238.63px;font-size:14.500px;line-height:14.500px;transform:scaleX(0.9756);transform-origin:0 0;font-weight:bold;">Rename Files</div>
<div class="b" style="left:475px;top:266px;width:1173px;height:767px;background:#fff;border:1px solid #a0a0a0;border-right:none"></div>
<div class="b" style="left:476px;top:267px;width:1150px;height:765px;overflow:hidden">
<div class="b" style="left:279.9px;top:41.19999999999999px;width:137.4px;height:29px;background:#fdfdf6"></div>
<div class="t" style="left:292.70px;top:50.01px;font-size:17.000px;line-height:17.000px;transform:scaleX(1.0102);transform-origin:0 0;color:#f5f5f0;font-family:'Liberation Serif',serif">1761292408</div>
<svg class="b" style="left:7px;top:15px" width="16" height="16" viewBox="0 0 16 16"><rect x="0" y="0" width="16" height="16" rx="3" fill="#0f5fc4"/><path d="M4.2 8.3 L6.9 11 L12 5.6" stroke="#fff" stroke-width="1.3" fill="none"/></svg>
<div class="t" style="left:29.40px;top:16.13px;font-size:15.200px;line-height:15.200px;transform:scaleX(0.9550);transform-origin:0 0;color:#000;">236</div>
<svg class="b" style="left:91px;top:13px" width="17" height="20" viewBox="0 0 17 20"><path d="M0.5 0.5 H10.5 L15.5 5.5 V19.5 H0.5Z" fill="#fafafa" stroke="#777" stroke-width="1"/><path d="M10.5 0.5 V5.5 H15.5" fill="#fff" stroke="#999" stroke-width=".8"/><defs><linearGradient id="g" x1="0" y1="0" x2="0" y2="1"><stop offset="0" stop-color="#1f5fc9"/><stop offset="1" stop-color="#2aa3f2"/></linearGradient></defs><rect x="3.8" y="7.6" width="8.6" height="8" fill="url(#g)"/><path d="M3.8 15.6 L7.6 11 L10 13.5 L11 12.6 L12.4 15.6Z" fill="#4fc3f7"/><circle cx="10.6" cy="9.4" r=".9" fill="#e3f2fd"/></svg>
<div class="t" style="left:112.60px;top:16.13px;font-size:15.200px;line-height:15.200px;transform:scaleX(0.9550);transform-origin:0 0;color:#000;">Screenshot 2025-06-30 094602.png</div>
<div class="t" style="left:387.30px;top:16.13px;font-size:15.200px;line-height:15.200px;transform:scaleX(0.9575);transform-origin:0 0;color:#000;">Program Screenshot - 236.png</div>
<div class="t" style="left:631.40px;top:16.13px;font-size:15.200px;line-height:15.200px;transform:scaleX(0.9586);transform-origin:0 0;color:#000;">C:\Users\kj\Pictures\Screenshots\</div>
<div class="t" style="left:880.10px;top:16.13px;font-size:15.200px;line-height:15.200px;transform:scaleX(0.9550);transform-origin:0 0;color:#000;">753</div>
<div class="t" style="left:965.20px;top:16.13px;font-size:15.200px;line-height:15.200px;transform:scaleX(0.9550);transform-origin:0 0;color:#000;">232</div>
<div class="t" style="left:1060.00px;top:16.13px;font-size:15.200px;line-height:15.200px;transform:scaleX(0.9550);transform-origin:0 0;color:#000;">OK</div>
<svg class="b" style="left:7px;top:41px" width="16" height="16" viewBox="0 0 16 16"><rect x="0" y="0" width="16" height="16" rx="3" fill="#0f5fc4"/><path d="M4.2 8.3 L6.9 11 L12 5.6" stroke="#fff" stroke-width="1.3" fill="none"/></svg>
<div class="t" style="left:29.40px;top:42.13px;font-size:15.200px;line-height:15.200px;transform:scaleX(0.9550);transform-origin:0 0;color:#000;">237</div>
<svg class="b" style="left:91px;top:39px" width="17" height="20" viewBox="0 0 17 20"><path d="M0.5 0.5 H10.5 L15.5 5.5 V19.5 H0.5Z" fill="#fafafa" stroke="#777" stroke-width="1"/><path d="M10.5 0.5 V5.5 H15.5" fill="#fff" stroke="#999" stroke-width=".8"/><defs><linearGradient id="g" x1="0" y1="0" x2="0" y2="1"><stop offset="0" stop-color="#1f5fc9"/><stop offset="1" stop-color="#2aa3f2"/></linearGradient></defs><rect x="3.8" y="7.6" width="8.6" height="8" fill="url(#g)"/><path d="M3.8 15.6 L7.6 11 L10 13.5 L11 12.6 L12.4 15.6Z" fill="#4fc3f7"/><circle cx="10.6" cy="9.4" r=".9" fill="#e3f2fd"/></svg>
<div class="t" style="left:112.60px;top:42.13px;font-size:15.200px;line-height:15.200px;transform:scaleX(0.9550);transform-origin:0 0;color:#000;">Screenshot 2025-06-30 095826.png</div>
<div class="t" style="left:387.30px;top:42.13px;font-size:15.200px;line-height:15.200px;transform:scaleX(0.9575);transform-origin:0 0;color:#000;">Program Screenshot - 237.png</div>
<div class="t" style="left:631.40px;top:42.13px;font-size:15.200px;line-height:15.200px;transform:scaleX(0.9586);transform-origin:0 0;color:#000;">C:\Users\kj\Pictures\Screenshots\</div>
<div class="t" style="left:880.10px;top:42.13px;font-size:15.200px;line-height:15.200px;transform:scaleX(0.9550);transform-origin:0 0;color:#000;">2024</div>
<div class="t" style="left:965.20px;top:42.13px;font-size:15.200px;line-height:15.200px;transform:scaleX(0.9550);transform-origin:0 0;color:#000;">909</div>
<div class="t" style="left:1060.00px;top:42.13px;font-size:15.200px;line-height:15.200px;transform:scaleX(0.9550);transform-origin:0 0;color:#000;">OK</div>
<svg class="b" style="left:7px;top:67px" width="16" height="16" viewBox="0 0 16 16"><rect x="0" y="0" width="16" height="16" rx="3" fill="#0f5fc4"/><path d="M4.2 8.3 L6.9 11 L12 5.6" stroke="#fff" stroke-width="1.3" fill="none"/></svg>
<div class="t" style="left:29.40px;top:68.13px;font-size:15.200px;line-height:15.200px;transform:scaleX(0.9550);transform-origin:0 0;color:#000;">238</div>
<svg class="b" style="left:91px;top:65px" width="17" height="20" viewBox="0 0 17 20"><path d="M0.5 0.5 H10.5 L15.5 5.5 V19.5 H0.5Z" fill="#fafafa" stroke="#777" stroke-width="1"/><path d="M10.5 0.5 V5.5 H15.5" fill="#fff" stroke="#999" stroke-width=".8"/><defs><linearGradient id="g" x1="0" y1="0" x2="0" y2="1"><stop offset="0" stop-color="#1f5fc9"/><stop offset="1" stop-color="#2aa3f2"/></linearGradient></defs><rect x="3.8" y="7.6" width="8.6" height="8" fill="url(#g)"/><path d="M3.8 15.6 L7.6 11 L10 13.5 L11 12.6 L12.4 15.6Z" fill="#4fc3f7"/><circle cx="10.6" cy="9.4" r=".9" fill="#e3f2fd"/></svg>
<div class="t" style="left:112.60px;top:68.13px;font-size:15.200px;line-height:15.200px;transform:scaleX(0.9550);transform-origin:0 0;color:#000;">Screenshot 2025-08-03 103623.png</div>
<div class="t" style="left:387.30px;top:68.13px;font-size:15.200px;line-height:15.200px;transform:scaleX(0.9575);transform-origin:0 0;color:#000;">Program Screenshot - 238.png</div>
<div class="t" style="left:631.40px;top:68.13px;font-size:15.200px;line-height:15.200px;transform:scaleX(0.9586);transform-origin:0 0;color:#000;">C:\Users\kj\Pictures\Screenshots\</div>
<div class="t" style="left:880.10px;top:68.13px;font-size:15.200px;line-height:15.200px;transform:scaleX(0.9550);transform-origin:0 0;color:#000;">1695</div>
<div class="t" style="left:965.20px;top:68.13px;font-size:15.200px;line-height:15.200px;transform:scaleX(0.9550);transform-origin:0 0;color:#000;">1262</div>
<div class="t" style="left:1060.00px;top:68.13px;font-size:15.200px;line-height:15.200px;transform:scaleX(0.9550);transform-origin:0 0;color:#000;">OK</div>
<svg class="b" style="left:7px;top:93px" width="16" height="16" viewBox="0 0 16 16"><rect x="0" y="0" width="16" height="16" rx="3" fill="#0f5fc4"/><path d="M4.2 8.3 L6.9 11 L12 5.6" stroke="#fff" stroke-width="1.3" fill="none"/></svg>
<div class="t" style="left:29.40px;top:94.13px;font-size:15.200px;line-height:15.200px;transform:scaleX(0.9550);transform-origin:0 0;color:#000;">239</div>
<svg class="b" style="left:91px;top:91px" width="17" height="20" viewBox="0 0 17 20"><path d="M0.5 0.5 H10.5 L15.5 5.5 V19.5 H0.5Z" fill="#fafafa" stroke="#777" stroke-width="1"/><path d="M10.5 0.5 V5.5 H15.5" fill="#fff" stroke="#999" stroke-width=".8"/><defs><linearGradient id="g" x1="0" y1="0" x2="0" y2="1"><stop offset="0" stop-color="#1f5fc9"/><stop offset="1" stop-color="#2aa3f2"/></linearGradient></defs><rect x="3.8" y="7.6" width="8.6" height="8" fill="url(#g)"/><path d="M3.8 15.6 L7.6 11 L10 13.5 L11 12.6 L12.4 15.6Z" fill="#4fc3f7"/><circle cx="10.6" cy="9.4" r=".9" fill="#e3f2fd"/></svg>
<div class="t" style="left:112.60px;top:94.13px;font-size:15.200px;line-height:15.200px;transform:scaleX(0.9550);transform-origin:0 0;color:#000;">Screenshot 2025-08-03 103804.png</div>
<div class="t" style="left:387.30px;top:94.13px;font-size:15.200px;line-height:15.200px;transform:scaleX(0.9575);transform-origin:0 0;color:#000;">Program Screenshot - 239.png</div>
<div class="t" style="left:631.40px;top:94.13px;font-size:15.200px;line-height:15.200px;transform:scaleX(0.9586);transform-origin:0 0;color:#000;">C:\Users\kj\Pictures\Screenshots\</div>
<div class="t" style="left:880.10px;top:94.13px;font-size:15.200px;line-height:15.200px;transform:scaleX(0.9550);transform-origin:0 0;color:#000;">1158</div>
<div class="t" style="left:965.20px;top:94.13px;font-size:15.200px;line-height:15.200px;transform:scaleX(0.9550);transform-origin:0 0;color:#000;">613</div>
<div class="t" style="left:1060.00px;top:94.13px;font-size:15.200px;line-height:15.200px;transform:scaleX(0.9550);transform-origin:0 0;color:#000;">OK</div>
<svg class="b" style="left:7px;top:119px" width="16" height="16" viewBox="0 0 16 16"><rect x="0" y="0" width="16" height="16" rx="3" fill="#0f5fc4"/><path d="M4.2 8.3 L6.9 11 L12 5.6" stroke="#fff" stroke-width="1.3" fill="none"/></svg>
<div class="t" style="left:29.40px;top:120.13px;font-size:15.200px;line-height:15.200px;transform:scaleX(0.9550);transform-origin:0 0;color:#000;">240</div>
<svg class="b" style="left:91px;top:117px" width="17" height="20" viewBox="0 0 17 20"><path d="M0.5 0.5 H10.5 L15.5 5.5 V19.5 H0.5Z" fill="#fafafa" stroke="#777" stroke-width="1"/><path d="M10.5 0.5 V5.5 H15.5" fill="#fff" stroke="#999" stroke-width=".8"/><defs><linearGradient id="g" x1="0" y1="0" x2="0" y2="1"><stop offset="0" stop-color="#1f5fc9"/><stop offset="1" stop-color="#2aa3f2"/></linearGradient></defs><rect x="3.8" y="7.6" width="8.6" height="8" fill="url(#g)"/><path d="M3.8 15.6 L7.6 11 L10 13.5 L11 12.6 L12.4 15.6Z" fill="#4fc3f7"/><circle cx="10.6" cy="9.4" r=".9" fill="#e3f2fd"/></svg>
<div class="t" style="left:112.60px;top:120.13px;font-size:15.200px;line-height:15.200px;transform:scaleX(0.9550);transform-origin:0 0;color:#000;">Screenshot 2025-08-03 103920.png</div>
<div class="t" style="left:387.30px;top:120.13px;font-size:15.200px;line-height:15.200px;transform:scaleX(0.9575);transform-origin:0 0;color:#000;">Program Screenshot - 240.png</div>
<div class="t" style="left:631.40px;top:120.13px;font-size:15.200px;line-height:15.200px;transform:scaleX(0.9586);transform-origin:0 0;color:#000;">C:\Users\kj\Pictures\Screenshots\</div>
<div class="t" style="left:880.10px;top:120.13px;font-size:15.200px;line-height:15.200px;transform:scaleX(0.9550);transform-origin:0 0;color:#000;">1695</div>
<div class="t" style="left:965.20px;top:120.13px;font-size:15.200px;line-height:15.200px;transform:scaleX(0.9550);transform-origin:0 0;color:#000;">1262</div>
<div class="t" style="left:1060.00px;top:120.13px;font-size:15.200px;line-height:15.200px;transform:scaleX(0.9550);transform-origin:0 0;color:#000;">OK</div>
<svg class="b" style="left:7px;top:145px" width="16" height="16" viewBox="0 0 16 16"><rect x="0" y="0" width="16" height="16" rx="3" fill="#0f5fc4"/><path d="M4.2 8.3 L6.9 11 L12 5.6" stroke="#fff" stroke-width="1.3" fill="none"/></svg>
<div class="t" style="left:29.40px;top:146.13px;font-size:15.200px;line-height:15.200px;transform:scaleX(0.9550);transform-origin:0 0;color:#000;">241</div>
<svg class="b" style="left:91px;top:143px" width="17" height="20" viewBox="0 0 17 20"><path d="M0.5 0.5 H10.5 L15.5 5.5 V19.5 H0.5Z" fill="#fafafa" stroke="#777" stroke-width="1"/><path d="M10.5 0.5 V5.5 H15.5" fill="#fff" stroke="#999" stroke-width=".8"/><defs><linearGradient id="g" x1="0" y1="0" x2="0" y2="1"><stop offset="0" stop-color="#1f5fc9"/><stop offset="1" stop-color="#2aa3f2"/></linearGradient></defs><rect x="3.8" y="7.6" width="8.6" height="8" fill="url(#g)"/><path d="M3.8 15.6 L7.6 11 L10 13.5 L11 12.6 L12.4 15.6Z" fill="#4fc3f7"/><circle cx="10.6" cy="9.4" r=".9" fill="#e3f2fd"/></svg>
<div class="t" style="left:112.60px;top:146.13px;font-size:15.200px;line-height:15.200px;transform:scaleX(0.9550);transform-origin:0 0;color:#000;">Screenshot 2025-08-03 103936.png</div>
<div class="t" style="left:387.30px;top:146.13px;font-size:15.200px;line-height:15.200px;transform:scaleX(0.9575);transform-origin:0 0;color:#000;">Program Screenshot - 241.png</div>
<div class="t" style="left:631.40px;top:146.13px;font-size:15.200px;line-height:15.200px;transform:scaleX(0.9586);transform-origin:0 0;color:#000;">C:\Users\kj\Pictures\Screenshots\</div>
<div class="t" style="left:880.10px;top:146.13px;font-size:15.200px;line-height:15.200px;transform:scaleX(0.9550);transform-origin:0 0;color:#000;">1695</div>
<div class="t" style="left:965.20px;top:146.13px;font-size:15.200px;line-height:15.200px;transform:scaleX(0.9550);transform-origin:0 0;color:#000;">1262</div>
<div class="t" style="left:1060.00px;top:146.13px;font-size:15.200px;line-height:15.200px;transform:scaleX(0.9550);transform-origin:0 0;color:#000;">OK</div>
<svg class="b" style="left:7px;top:171px" width="16" height="16" viewBox="0 0 16 16"><rect x="0" y="0" width="16" height="16" rx="3" fill="#0f5fc4"/><path d="M4.2 8.3 L6.9 11 L12 5.6" stroke="#fff" stroke-width="1.3" fill="none"/></svg>
<div class="t" style="left:29.40px;top:172.13px;font-size:15.200px;line-height:15.200px;transform:scaleX(0.9550);transform-origin:0 0;color:#000;">242</div>
<svg class="b" style="left:91px;top:169px" width="17" height="20" viewBox="0 0 17 20"><path d="M0.5 0.5 H10.5 L15.5 5.5 V19.5 H0.5Z" fill="#fafafa" stroke="#777" stroke-width="1"/><path d="M10.5 0.5 V5.5 H15.5" fill="#fff" stroke="#999" stroke-width=".8"/><defs><linearGradient id="g" x1="0" y1="0" x2="0" y2="1"><stop offset="0" stop-color="#1f5fc9"/><stop offset="1" stop-color="#2aa3f2"/></linearGradient></defs><rect x="3.8" y="7.6" width="8.6" height="8" fill="url(#g)"/><path d="M3.8 15.6 L7.6 11 L10 13.5 L11 12.6 L12.4 15.6Z" fill="#4fc3f7"/><circle cx="10.6" cy="9.4" r=".9" fill="#e3f2fd"/></svg>
<div class="t" style="left:112.60px;top:172.13px;font-size:15.200px;line-height:15.200px;transform:scaleX(0.9550);transform-origin:0 0;color:#000;">Screenshot 2025-08-03 103956.png</div>
<div class="t" style="left:387.30px;top:172.13px;font-size:15.200px;line-height:15.200px;transform:scaleX(0.9575);transform-origin:0 0;color:#000;">Program Screenshot - 242.png</div>
<div class="t" style="left:631.40px;top:172.13px;font-size:15.200px;line-height:15.200px;transform:scaleX(0.9586);transform-origin:0 0;color:#000;">C:\Users\kj\Pictures\Screenshots\</div>
<div class="t" style="left:880.10px;top:172.13px;font-size:15.200px;line-height:15.200px;transform:scaleX(0.9550);transform-origin:0 0;color:#000;">1695</div>
<div class="t" style="left:965.20px;top:172.13px;font-size:15.200px;line-height:15.200px;transform:scaleX(0.9550);transform-origin:0 0;color:#000;">1262</div>
<div class="t" style="left:1060.00px;top:172.13px;font-size:15.200px;line-height:15.200px;transform:scaleX(0.9550);transform-origin:0 0;color:#000;">OK</div>
<svg class="b" style="left:7px;top:197px" width="16" height="16" viewBox="0 0 16 16"><rect x="0" y="0" width="16" height="16" rx="3" fill="#0f5fc4"/><path d="M4.2 8.3 L6.9 11 L12 5.6" stroke="#fff" stroke-width="1.3" fill="none"/></svg>
<div class="t" style="left:29.40px;top:198.13px;font-size:15.200px;line-height:15.200px;transform:scaleX(0.9550);transform-origin:0 0;color:#000;">243</div>
<svg class="b" style="left:91px;top:195px" width="17" height="20" viewBox="0 0 17 20"><path d="M0.5 0.5 H10.5 L15.5 5.5 V19.5 H0.5Z" fill="#fafafa" stroke="#777" stroke-width="1"/><path d="M10.5 0.5 V5.5 H15.5" fill="#fff" stroke="#999" stroke-width=".8"/><defs><linearGradient id="g" x1="0" y1="0" x2="0" y2="1"><stop offset="0" stop-color="#1f5fc9"/><stop offset="1" stop-color="#2aa3f2"/></linearGradient></defs><rect x="3.8" y="7.6" width="8.6" height="8" fill="url(#g)"/><path d="M3.8 15.6 L7.6 11 L10 13.5 L11 12.6 L12.4 15.6Z" fill="#4fc3f7"/><circle cx="10.6" cy="9.4" r=".9" fill="#e3f2fd"/></svg>
<div class="t" style="left:112.60px;top:198.13px;font-size:15.200px;line-height:15.200px;transform:scaleX(0.9550);transform-origin:0 0;color:#000;">Screenshot 2025-08-03 104012.png</div>
<div class="t" style="left:387.30px;top:198.13px;font-size:15.200px;line-height:15.200px;transform:scaleX(0.9575);transform-origin:0 0;color:#000;">Program Screenshot - 243.png</div>
<div class="t" style="left:631.40px;top:198.13px;font-size:15.200px;line-height:15.200px;transform:scaleX(0.9586);transform-origin:0 0;color:#000;">C:\Users\kj\Pictures\Screenshots\</div>
<div class="t" style="left:880.10px;top:198.13px;font-size:15.200px;line-height:15.200px;transform:scaleX(0.9550);transform-origin:0 0;color:#000;">1695</div>
<div class="t" style="left:965.20px;top:198.13px;font-size:15.200px;line-height:15.200px;transform:scaleX(0.9550);transform-origin:0 0;color:#000;">1262</div>
<div class="t" style="left:1060.00px;top:198.13px;font-size:15.200px;line-height:15.200px;transform:scaleX(0.9550);transform-origin:0 0;color:#000;">OK</div>
<svg class="b" style="left:7px;top:223px" width="16" height="16" viewBox="0 0 16 16"><rect x="0" y="0" width="16" height="16" rx="3" fill="#0f5fc4"/><path d="M4.2 8.3 L6.9 11 L12 5.6" stroke="#fff" stroke-width="1.3" fill="none"/></svg>
<div class="t" style="left:29.40px;top:224.13px;font-size:15.200px;line-height:15.200px;transform:scaleX(0.9550);transform-origin:0 0;color:#000;">244</div>
<svg class="b" style="left:91px;top:221px" width="17" height="20" viewBox="0 0 17 20"><path d="M0.5 0.5 H10.5 L15.5 5.5 V19.5 H0.5Z" fill="#fafafa" stroke="#777" stroke-width="1"/><path d="M10.5 0.5 V5.5 H15.5" fill="#fff" stroke="#999" stroke-width=".8"/><defs><linearGradient id="g" x1="0" y1="0" x2="0" y2="1"><stop offset="0" stop-color="#1f5fc9"/><stop offset="1" stop-color="#2aa3f2"/></linearGradient></defs><rect x="3.8" y="7.6" width="8.6" height="8" fill="url(#g)"/><path d="M3.8 15.6 L7.6 11 L10 13.5 L11 12.6 L12.4 15.6Z" fill="#4fc3f7"/><circle cx="10.6" cy="9.4" r=".9" fill="#e3f2fd"/></svg>
<div class="t" style="left:112.60px;top:224.13px;font-size:15.200px;line-height:15.200px;transform:scaleX(0.9550);transform-origin:0 0;color:#000;">Screenshot 2025-08-03 104032.png</div>
<div class="t" style="left:387.30px;top:224.13px;font-size:15.200px;line-height:15.200px;transform:scaleX(0.9575);transform-origin:0 0;color:#000;">Program Screenshot - 244.png</div>
<div class="t" style="left:631.40px;top:224.13px;font-size:15.200px;line-height:15.200px;transform:scaleX(0.9586);transform-origin:0 0;color:#000;">C:\Users\kj\Pictures\Screenshots\</div>
<div class="t" style="left:880.10px;top:224.13px;font-size:15.200px;line-height:15.200px;transform:scaleX(0.9550);transform-origin:0 0;color:#000;">1695</div>
<div class="t" style="left:965.20px;top:224.13px;font-size:15.200px;line-height:15.200px;transform:scaleX(0.9550);transform-origin:0 0;color:#000;">1262</div>
<div class="t" style="left:1060.00px;top:224.13px;font-size:15.200px;line-height:15.200px;transform:scaleX(0.9550);transform-origin:0 0;color:#000;">OK</div>
<svg class="b" style="left:7px;top:249px" width="16" height="16" viewBox="0 0 16 16"><rect x="0" y="0" width="16" height="16" rx="3" fill="#0f5fc4"/><path d="M4.2 8.3 L6.9 11 L12 5.6" stroke="#fff" stroke-width="1.3" fill="none"/></svg>
<div class="t" style="left:29.40px;top:250.13px;font-size:15.200px;line-height:15.200px;transform:scaleX(0.9550);transform-origin:0 0;color:#000;">245</div>
<svg class="b" style="left:91px;top:247px" width="17" height="20" viewBox="0 0 17 20"><path d="M0.5 0.5 H10.5 L15.5 5.5 V19.5 H0.5Z" fill="#fafafa" stroke="#777" stroke-width="1"/><path d="M10.5 0.5 V5.5 H15.5" fill="#fff" stroke="#999" stroke-width=".8"/><defs><linearGradient id="g" x1="0" y1="0" x2="0" y2="1"><stop offset="0" stop-color="#1f5fc9"/><stop offset="1" stop-color="#2aa3f2"/></linearGradient></defs><rect x="3.8" y="7.6" width="8.6" height="8" fill="url(#g)"/><path d="M3.8 15.6 L7.6 11 L10 13.5 L11 12.6 L12.4 15.6Z" fill="#4fc3f7"/><circle cx="10.6" cy="9.4" r=".9" fill="#e3f2fd"/></svg>
<div class="t" style="left:112.60px;top:250.13px;font-size:15.200px;line-height:15.200px;transform:scaleX(0.9550);transform-origin:0 0;color:#000;">Screenshot 2025-08-03 104039.png</div>
<div class="t" style="left:387.30px;top:250.13px;font-size:15.200px;line-height:15.200px;transform:scaleX(0.9575);transform-origin:0 0;color:#000;">Program Screenshot - 245.png</div>
<div class="t" style="left:631.40px;top:250.13px;font-size:15.200px;line-height:15.200px;transform:scaleX(0.9586);transform-origin:0 0;color:#000;">C:\Users\kj\Pictures\Screenshots\</div>
<div class="t" style="left:880.10px;top:250.13px;font-size:15.200px;line-height:15.200px;transform:scaleX(0.9550);transform-origin:0 0;color:#000;">1695</div>
<div class="t" style="left:965.20px;top:250.13px;font-size:15.200px;line-height:15.200px;transform:scaleX(0.9550);transform-origin:0 0;color:#000;">1262</div>
<div class="t" style="left:1060.00px;top:250.13px;font-size:15.200px;line-height:15.200px;transform:scaleX(0.9550);transform-origin:0 0;color:#000;">OK</div>
<svg class="b" style="left:7px;top:275px" width="16" height="16" viewBox="0 0 16 16"><rect x="0" y="0" width="16" height="16" rx="3" fill="#0f5fc4"/><path d="M4.2 8.3 L6.9 11 L12 5.6" stroke="#fff" stroke-width="1.3" fill="none"/></svg>
<div class="t" style="left:29.40px;top:276.13px;font-size:15.200px;line-height:15.200px;transform:scaleX(0.9550);transform-origin:0 0;color:#000;">246</div>
<svg class="b" style="left:91px;top:273px" width="17" height="20" viewBox="0 0 17 20"><path d="M0.5 0.5 H10.5 L15.5 5.5 V19.5 H0.5Z" fill="#fafafa" stroke="#777" stroke-width="1"/><path d="M10.5 0.5 V5.5 H15.5" fill="#fff" stroke="#999" stroke-width=".8"/><defs><linearGradient id="g" x1="0" y1="0" x2="0" y2="1"><stop offset="0" stop-color="#1f5fc9"/><stop offset="1" stop-color="#2aa3f2"/></linearGradient></defs><rect x="3.8" y="7.6" width="8.6" height="8" fill="url(#g)"/><path d="M3.8 15.6 L7.6 11 L10 13.5 L11 12.6 L12.4 15.6Z" fill="#4fc3f7"/><circle cx="10.6" cy="9.4" r=".9" fill="#e3f2fd"/></svg>
<div class="t" style="left:112.60px;top:276.13px;font-size:15.200px;line-height:15.200px;transform:scaleX(0.9550);transform-origin:0 0;color:#000;">Screenshot 2025-08-03 104044.png</div>
<div class="t" style="left:387.30px;top:276.13px;font-size:15.200px;line-height:15.200px;transform:scaleX(0.9575);transform-origin:0 0;color:#000;">Program Screenshot - 246.png</div>
<div class="t" style="left:631.40px;top:276.13px;font-size:15.200px;line-height:15.200px;transform:scaleX(0.9586);transform-origin:0 0;color:#000;">C:\Users\kj\Pictures\Screenshots\</div>
<div class="t" style="left:880.10px;top:276.13px;font-size:15.200px;line-height:15.200px;transform:scaleX(0.9550);transform-origin:0 0;color:#000;">1695</div>
<div class="t" style="left:965.20px;top:276.13px;font-size:15.200px;line-height:15.200px;transform:scaleX(0.9550);transform-origin:0 0;color:#000;">1262</div>
<div class="t" style="left:1060.00px;top:276.13px;font-size:15.200px;line-height:15.200px;transform:scaleX(0.9550);transform-origin:0 0;color:#000;">OK</div>
<svg class="b" style="left:7px;top:301px" width="16" height="16" viewBox="0 0 16 16"><rect x="0" y="0" width="16" height="16" rx="3" fill="#0f5fc4"/><path d="M4.2 8.3 L6.9 11 L12 5.6" stroke="#fff" stroke-width="1.3" fill="none"/></svg>
<div class="t" style="left:29.40px;top:302.13px;font-size:15.200px;line-height:15.200px;transform:scaleX(0.9550);transform-origin:0 0;color:#000;">247</div>
<svg class="b" style="left:91px;top:299px" width="17" height="20" viewBox="0 0 17 20"><path d="M0.5 0.5 H10.5 L15.5 5.5 V19.5 H0.5Z" fill="#fafafa" stroke="#777" stroke-width="1"/><path d="M10.5 0.5 V5.5 H15.5" fill="#fff" stroke="#999" stroke-width=".8"/><defs><linearGradient id="g" x1="0" y1="0" x2="0" y2="1"><stop offset="0" stop-color="#1f5fc9"/><stop offset="1" stop-color="#2aa3f2"/></linearGradient></defs><rect x="3.8" y="7.6" width="8.6" height="8" fill="url(#g)"/><path d="M3.8 15.6 L7.6 11 L10 13.5 L11 12.6 L12.4 15.6Z" fill="#4fc3f7"/><circle cx="10.6" cy="9.4" r=".9" fill="#e3f2fd"/></svg>
<div class="t" style="left:112.60px;top:302.13px;font-size:15.200px;line-height:15.200px;transform:scaleX(0.9550);transform-origin:0 0;color:#000;">Screenshot 2025-08-03 104051.png</div>
<div class="t" style="left:387.30px;top:302.13px;font-size:15.200px;line-height:15.200px;transform:scaleX(0.9575);transform-origin:0 0;color:#000;">Program Screenshot - 247.png</div>
<div class="t" style="left:631.40px;top:302.13px;font-size:15.200px;line-height:15.200px;transform:scaleX(0.9586);transform-origin:0 0;color:#000;">C:\Users\kj\Pictures\Screenshots\</div>
<div class="t" style="left:880.10px;top:302.13px;font-size:15.200px;line-height:15.200px;transform:scaleX(0.9550);transform-origin:0 0;color:#000;">1695</div>
<div class="t" style="left:965.20px;top:302.13px;font-size:15.200px;line-height:15.200px;transform:scaleX(0.9550);transform-origin:0 0;color:#000;">1262</div>
<div class="t" style="left:1060.00px;top:302.13px;font-size:15.200px;line-height:15.200px;transform:scaleX(0.9550);transform-origin:0 0;color:#000;">OK</div>
<svg class="b" style="left:7px;top:327px" width="16" height="16" viewBox="0 0 16 16"><rect x="0" y="0" width="16" height="16" rx="3" fill="#0f5fc4"/><path d="M4.2 8.3 L6.9 11 L12 5.6" stroke="#fff" stroke-width="1.3" fill="none"/></svg>
<div class="t" style="left:29.40px;top:328.13px;font-size:15.200px;line-height:15.200px;transform:scaleX(0.9550);transform-origin:0 0;color:#000;">248</div>
<svg class="b" style="left:91px;top:325px" width="17" height="20" viewBox="0 0 17 20"><path d="M0.5 0.5 H10.5 L15.5 5.5 V19.5 H0.5Z" fill="#fafafa" stroke="#777" stroke-width="1"/><path d="M10.5 0.5 V5.5 H15.5" fill="#fff" stroke="#999" stroke-width=".8"/><defs><linearGradient id="g" x1="0" y1="0" x2="0" y2="1"><stop offset="0" stop-color="#1f5fc9"/><stop offset="1" stop-color="#2aa3f2"/></linearGradient></defs><rect x="3.8" y="7.6" width="8.6" height="8" fill="url(#g)"/><path d="M3.8 15.6 L7.6 11 L10 13.5 L11 12.6 L12.4 15.6Z" fill="#4fc3f7"/><circle cx="10.6" cy="9.4" r=".9" fill="#e3f2fd"/></svg>
<div class="t" style="left:112.60px;top:328.13px;font-size:15.200px;line-height:15.200px;transform:scaleX(0.9550);transform-origin:0 0;color:#000;">Screenshot 2025-08-03 104056.png</div>
<div class="t" style="left:387.30px;top:328.13px;font-size:15.200px;line-height:15.200px;transform:scaleX(0.9575);transform-origin:0 0;color:#000;">Program Screenshot - 248.png</div>
<div class="t" style="left:631.40px;top:328.13px;font-size:15.200px;line-height:15.200px;transform:scaleX(0.9586);transform-origin:0 0;color:#000;">C:\Users\kj\Pictures\Screenshots\</div>
<div class="t" style="left:880.10px;top:328.13px;font-size:15.200px;line-height:15.200px;transform:scaleX(0.9550);transform-origin:0 0;color:#000;">1695</div>
<div class="t" style="left:965.20px;top:328.13px;font-size:15.200px;line-height:15.200px;transform:scaleX(0.9550);transform-origin:0 0;color:#000;">1262</div>
<div class="t" style="left:1060.00px;top:328.13px;font-size:15.200px;line-height:15.200px;transform:scaleX(0.9550);transform-origin:0 0;color:#000;">OK</div>
<svg class="b" style="left:7px;top:353px" width="16" height="16" viewBox="0 0 16 16"><rect x="0" y="0" width="16" height="16" rx="3" fill="#0f5fc4"/><path d="M4.2 8.3 L6.9 11 L12 5.6" stroke="#fff" stroke-width="1.3" fill="none"/></svg>
<div class="t" style="left:29.40px;top:354.13px;font-size:15.200px;line-height:15.200px;transform:scaleX(0.9550);transform-origin:0 0;color:#000;">249</div>
<svg class="b" style="left:91px;top:351px" width="17" height="20" viewBox="0 0 17 20"><path d="M0.5 0.5 H10.5 L15.5 5.5 V19.5 H0.5Z" fill="#fafafa" stroke="#777" stroke-width="1"/><path d="M10.5 0.5 V5.5 H15.5" fill="#fff" stroke="#999" stroke-width=".8"/><defs><linearGradient id="g" x1="0" y1="0" x2="0" y2="1"><stop offset="0" stop-color="#1f5fc9"/><stop offset="1" stop-color="#2aa3f2"/></linearGradient></defs><rect x="3.8" y="7.6" width="8.6" height="8" fill="url(#g)"/><path d="M3.8 15.6 L7.6 11 L10 13.5 L11 12.6 L12.4 15.6Z" fill="#4fc3f7"/><circle cx="10.6" cy="9.4" r=".9" fill="#e3f2fd"/></svg>
<div class="t" style="left:112.60px;top:354.13px;font-size:15.200px;line-height:15.200px;transform:scaleX(0.9550);transform-origin:0 0;color:#000;">Screenshot 2025-08-03 104101.png</div>
<div class="t" style="left:387.30px;top:354.13px;font-size:15.200px;line-height:15.200px;transform:scaleX(0.9575);transform-origin:0 0;color:#000;">Program Screenshot - 249.png</div>
<div class="t" style="left:631.40px;top:354.13px;font-size:15.200px;line-height:15.200px;transform:scaleX(0.9586);transform-origin:0 0;color:#000;">C:\Users\kj\Pictures\Screenshots\</div>
<div class="t" style="left:880.10px;top:354.13px;font-size:15.200px;line-height:15.200px;transform:scaleX(0.9550);transform-origin:0 0;color:#000;">1695</div>
<div class="t" style="left:965.20px;top:354.13px;font-size:15.200px;line-height:15.200px;transform:scaleX(0.9550);transform-origin:0 0;color:#000;">1262</div>
<div class="t" style="left:1060.00px;top:354.13px;font-size:15.200px;line-height:15.200px;transform:scaleX(0.9550);transform-origin:0 0;color:#000;">OK</div>
<svg class="b" style="left:7px;top:379px" width="16" height="16" viewBox="0 0 16 16"><rect x="0" y="0" width="16" height="16" rx="3" fill="#0f5fc4"/><path d="M4.2 8.3 L6.9 11 L12 5.6" stroke="#fff" stroke-width="1.3" fill="none"/></svg>
<div class="t" style="left:29.40px;top:380.13px;font-size:15.200px;line-height:15.200px;transform:scaleX(0.9550);transform-origin:0 0;color:#000;">250</div>
<svg class="b" style="left:91px;top:377px" width="17" height="20" viewBox="0 0 17 20"><path d="M0.5 0.5 H10.5 L15.5 5.5 V19.5 H0.5Z" fill="#fafafa" stroke="#777" stroke-width="1"/><path d="M10.5 0.5 V5.5 H15.5" fill="#fff" stroke="#999" stroke-width=".8"/><defs><linearGradient id="g" x1="0" y1="0" x2="0" y2="1"><stop offset="0" stop-color="#1f5fc9"/><stop offset="1" stop-color="#2aa3f2"/></linearGradient></defs><rect x="3.8" y="7.6" width="8.6" height="8" fill="url(#g)"/><path d="M3.8 15.6 L7.6 11 L10 13.5 L11 12.6 L12.4 15.6Z" fill="#4fc3f7"/><circle cx="10.6" cy="9.4" r=".9" fill="#e3f2fd"/></svg>
<div class="t" style="left:112.60px;top:380.13px;font-size:15.200px;line-height:15.200px;transform:scaleX(0.9550);transform-origin:0 0;color:#000;">Screenshot 2025-08-03 104309.png</div>
<div class="t" style="left:387.30px;top:380.13px;font-size:15.200px;line-height:15.200px;transform:scaleX(0.9575);transform-origin:0 0;color:#000;">Program Screenshot - 250.png</div>
<div class="t" style="left:631.40px;top:380.13px;font-size:15.200px;line-height:15.200px;transform:scaleX(0.9586);transform-origin:0 0;color:#000;">C:\Users\kj\Pictures\Screenshots\</div>
<div class="t" style="left:880.10px;top:380.13px;font-size:15.200px;line-height:15.200px;transform:scaleX(0.9550);transform-origin:0 0;color:#000;">1695</div>
<div class="t" style="left:965.20px;top:380.13px;font-size:15.200px;line-height:15.200px;transform:scaleX(0.9550);transform-origin:0 0;color:#000;">1262</div>
<div class="t" style="left:1060.00px;top:380.13px;font-size:15.200px;line-height:15.200px;transform:scaleX(0.9550);transform-origin:0 0;color:#000;">OK</div>
<svg class="b" style="left:7px;top:405px" width="16" height="16" viewBox="0 0 16 16"><rect x="0" y="0" width="16" height="16" rx="3" fill="#0f5fc4"/><path d="M4.2 8.3 L6.9 11 L12 5.6" stroke="#fff" stroke-width="1.3" fill="none"/></svg>
<div class="t" style="left:29.40px;top:406.13px;font-size:15.200px;line-height:15.200px;transform:scaleX(0.9550);transform-origin:0 0;color:#000;">251</div>
<svg class="b" style="left:91px;top:403px" width="17" height="20" viewBox="0 0 17 20"><path d="M0.5 0.5 H10.5 L15.5 5.5 V19.5 H0.5Z" fill="#fafafa" stroke="#777" stroke-width="1"/><path d="M10.5 0.5 V5.5 H15.5" fill="#fff" stroke="#999" stroke-width=".8"/><defs><linearGradient id="g" x1="0" y1="0" x2="0" y2="1"><stop offset="0" stop-color="#1f5fc9"/><stop offset="1" stop-color="#2aa3f2"/></linearGradient></defs><rect x="3.8" y="7.6" width="8.6" height="8" fill="url(#g)"/><path d="M3.8 15.6 L7.6 11 L10 13.5 L11 12.6 L12.4 15.6Z" fill="#4fc3f7"/><circle cx="10.6" cy="9.4" r=".9" fill="#e3f2fd"/></svg>
<div class="t" style="left:112.60px;top:406.13px;font-size:15.200px;line-height:15.200px;transform:scaleX(0.9550);transform-origin:0 0;color:#000;">Screenshot 2025-08-03 104353.png</div>
<div class="t" style="left:387.30px;top:406.13px;font-size:15.200px;line-height:15.200px;transform:scaleX(0.9575);transform-origin:0 0;color:#000;">Program Screenshot - 251.png</div>
<div class="t" style="left:631.40px;top:406.13px;font-size:15.200px;line-height:15.200px;transform:scaleX(0.9586);transform-origin:0 0;color:#000;">C:\Users\kj\Pictures\Screenshots\</div>
<div class="t" style="left:880.10px;top:406.13px;font-size:15.200px;line-height:15.200px;transform:scaleX(0.9550);transform-origin:0 0;color:#000;">1695</div>
<div class="t" style="left:965.20px;top:406.13px;font-size:15.200px;line-height:15.200px;transform:scaleX(0.9550);transform-origin:0 0;color:#000;">1262</div>
<div class="t" style="left:1060.00px;top:406.13px;font-size:15.200px;line-height:15.200px;transform:scaleX(0.9550);transform-origin:0 0;color:#000;">OK</div>
<svg class="b" style="left:7px;top:431px" width="16" height="16" viewBox="0 0 16 16"><rect x="0" y="0" width="16" height="16" rx="3" fill="#0f5fc4"/><path d="M4.2 8.3 L6.9 11 L12 5.6" stroke="#fff" stroke-width="1.3" fill="none"/></svg>
<div class="t" style="left:29.40px;top:432.13px;font-size:15.200px;line-height:15.200px;transform:scaleX(0.9550);transform-origin:0 0;color:#000;">252</div>
<svg class="b" style="left:91px;top:429px" width="17" height="20" viewBox="0 0 17 20"><path d="M0.5 0.5 H10.5 L15.5 5.5 V19.5 H0.5Z" fill="#fafafa" stroke="#777" stroke-width="1"/><path d="M10.5 0.5 V5.5 H15.5" fill="#fff" stroke="#999" stroke-width=".8"/><defs><linearGradient id="g" x1="0" y1="0" x2="0" y2="1"><stop offset="0" stop-color="#1f5fc9"/><stop offset="1" stop-color="#2aa3f2"/></linearGradient></defs><rect x="3.8" y="7.6" width="8.6" height="8" fill="url(#g)"/><path d="M3.8 15.6 L7.6 11 L10 13.5 L11 12.6 L12.4 15.6Z" fill="#4fc3f7"/><circle cx="10.6" cy="9.4" r=".9" fill="#e3f2fd"/></svg>
<div class="t" style="left:112.60px;top:432.13px;font-size:15.200px;line-height:15.200px;transform:scaleX(0.9550);transform-origin:0 0;color:#000;">Screenshot 2025-08-03 104821.png</div>
<div class="t" style="left:387.30px;top:432.13px;font-size:15.200px;line-height:15.200px;transform:scaleX(0.9575);transform-origin:0 0;color:#000;">Program Screenshot - 252.png</div>
<div class="t" style="left:631.40px;top:432.13px;font-size:15.200px;line-height:15.200px;transform:scaleX(0.9586);transform-origin:0 0;color:#000;">C:\Users\kj\Pictures\Screenshots\</div>
<div class="t" style="left:880.10px;top:432.13px;font-size:15.200px;line-height:15.200px;transform:scaleX(0.9550);transform-origin:0 0;color:#000;">1695</div>
<div class="t" style="left:965.20px;top:432.13px;font-size:15.200px;line-height:15.200px;transform:scaleX(0.9550);transform-origin:0 0;color:#000;">1262</div>
<div class="t" style="left:1060.00px;top:432.13px;font-size:15.200px;line-height:15.200px;transform:scaleX(0.9550);transform-origin:0 0;color:#000;">OK</div>
<svg class="b" style="left:7px;top:457px" width="16" height="16" viewBox="0 0 16 16"><rect x="0" y="0" width="16" height="16" rx="3" fill="#0f5fc4"/><path d="M4.2 8.3 L6.9 11 L12 5.6" stroke="#fff" stroke-width="1.3" fill="none"/></svg>
<div class="t" style="left:29.40px;top:458.13px;font-size:15.200px;line-height:15.200px;transform:scaleX(0.9550);transform-origin:0 0;color:#000;">253</div>
<svg class="b" style="left:91px;top:455px" width="17" height="20" viewBox="0 0 17 20"><path d="M0.5 0.5 H10.5 L15.5 5.5 V19.5 H0.5Z" fill="#fafafa" stroke="#777" stroke-width="1"/><path d="M10.5 0.5 V5.5 H15.5" fill="#fff" stroke="#999" stroke-width=".8"/><defs><linearGradient id="g" x1="0" y1="0" x2="0" y2="1"><stop offset="0" stop-color="#1f5fc9"/><stop offset="1" stop-color="#2aa3f2"/></linearGradient></defs><rect x="3.8" y="7.6" width="8.6" height="8" fill="url(#g)"/><path d="M3.8 15.6 L7.6 11 L10 13.5 L11 12.6 L12.4 15.6Z" fill="#4fc3f7"/><circle cx="10.6" cy="9.4" r=".9" fill="#e3f2fd"/></svg>
<div class="t" style="left:112.60px;top:458.13px;font-size:15.200px;line-height:15.200px;transform:scaleX(0.9550);transform-origin:0 0;color:#000;">Screenshot 2025-08-03 105501.png</div>
<div class="t" style="left:387.30px;top:458.13px;font-size:15.200px;line-height:15.200px;transform:scaleX(0.9575);transform-origin:0 0;color:#000;">Program Screenshot - 253.png</div>
<div class="t" style="left:631.40px;top:458.13px;font-size:15.200px;line-height:15.200px;transform:scaleX(0.9586);transform-origin:0 0;color:#000;">C:\Users\kj\Pictures\Screenshots\</div>
<div class="t" style="left:880.10px;top:458.13px;font-size:15.200px;line-height:15.200px;transform:scaleX(0.9550);transform-origin:0 0;color:#000;">1694</div>
<div class="t" style="left:965.20px;top:458.13px;font-size:15.200px;line-height:15.200px;transform:scaleX(0.9550);transform-origin:0 0;color:#000;">1261</div>
<div class="t" style="left:1060.00px;top:458.13px;font-size:15.200px;line-height:15.200px;transform:scaleX(0.9550);transform-origin:0 0;color:#000;">OK</div>
<svg class="b" style="left:7px;top:483px" width="16" height="16" viewBox="0 0 16 16"><rect x="0" y="0" width="16" height="16" rx="3" fill="#0f5fc4"/><path d="M4.2 8.3 L6.9 11 L12 5.6" stroke="#fff" stroke-width="1.3" fill="none"/></svg>
<div class="t" style="left:29.40px;top:484.13px;font-size:15.200px;line-height:15.200px;transform:scaleX(0.9550);transform-origin:0 0;color:#000;">254</div>
<svg class="b" style="left:91px;top:481px" width="17" height="20" viewBox="0 0 17 20"><path d="M0.5 0.5 H10.5 L15.5 5.5 V19.5 H0.5Z" fill="#fafafa" stroke="#777" stroke-width="1"/><path d="M10.5 0.5 V5.5 H15.5" fill="#fff" stroke="#999" stroke-width=".8"/><defs><linearGradient id="g" x1="0" y1="0" x2="0" y2="1"><stop offset="0" stop-color="#1f5fc9"/><stop offset="1" stop-color="#2aa3f2"/></linearGradient></defs><rect x="3.8" y="7.6" width="8.6" height="8" fill="url(#g)"/><path d="M3.8 15.6 L7.6 11 L10 13.5 L11 12.6 L12.4 15.6Z" fill="#4fc3f7"/><circle cx="10.6" cy="9.4" r=".9" fill="#e3f2fd"/></svg>
<div class="t" style="left:112.60px;top:484.13px;font-size:15.200px;line-height:15.200px;transform:scaleX(0.9550);transform-origin:0 0;color:#000;">Screenshot 2025-08-03 105529.png</div>
<div class="t" style="left:387.30px;top:484.13px;font-size:15.200px;line-height:15.200px;transform:scaleX(0.9575);transform-origin:0 0;color:#000;">Program Screenshot - 254.png</div>
<div class="t" style="left:631.40px;top:484.13px;font-size:15.200px;line-height:15.200px;transform:scaleX(0.9586);transform-origin:0 0;color:#000;">C:\Users\kj\Pictures\Screenshots\</div>
<div class="t" style="left:880.10px;top:484.13px;font-size:15.200px;line-height:15.200px;transform:scaleX(0.9550);transform-origin:0 0;color:#000;">1694</div>
<div class="t" style="left:965.20px;top:484.13px;font-size:15.200px;line-height:15.200px;transform:scaleX(0.9550);transform-origin:0 0;color:#000;">1261</div>
<div class="t" style="left:1060.00px;top:484.13px;font-size:15.200px;line-height:15.200px;transform:scaleX(0.9550);transform-origin:0 0;color:#000;">OK</div>
<svg class="b" style="left:7px;top:509px" width="16" height="16" viewBox="0 0 16 16"><rect x="0" y="0" width="16" height="16" rx="3" fill="#0f5fc4"/><path d="M4.2 8.3 L6.9 11 L12 5.6" stroke="#fff" stroke-width="1.3" fill="none"/></svg>
<div class="t" style="left:29.40px;top:510.13px;font-size:15.200px;line-height:15.200px;transform:scaleX(0.9550);transform-origin:0 0;color:#000;">255</div>
<svg class="b" style="left:91px;top:507px" width="17" height="20" viewBox="0 0 17 20"><path d="M0.5 0.5 H10.5 L15.5 5.5 V19.5 H0.5Z" fill="#fafafa" stroke="#777" stroke-width="1"/><path d="M10.5 0.5 V5.5 H15.5" fill="#fff" stroke="#999" stroke-width=".8"/><defs><linearGradient id="g" x1="0" y1="0" x2="0" y2="1"><stop offset="0" stop-color="#1f5fc9"/><stop offset="1" stop-color="#2aa3f2"/></linearGradient></defs><rect x="3.8" y="7.6" width="8.6" height="8" fill="url(#g)"/><path d="M3.8 15.6 L7.6 11 L10 13.5 L11 12.6 L12.4 15.6Z" fill="#4fc3f7"/><circle cx="10.6" cy="9.4" r=".9" fill="#e3f2fd"/></svg>
<div class="t" style="left:112.60px;top:510.13px;font-size:15.200px;line-height:15.200px;transform:scaleX(0.9550);transform-origin:0 0;color:#000;">Screenshot 2025-08-03 105700.png</div>
<div class="t" style="left:387.30px;top:510.13px;font-size:15.200px;line-height:15.200px;transform:scaleX(0.9575);transform-origin:0 0;color:#000;">Program Screenshot - 255.png</div>
<div class="t" style="left:631.40px;top:510.13px;font-size:15.200px;line-height:15.200px;transform:scaleX(0.9586);transform-origin:0 0;color:#000;">C:\Users\kj\Pictures\Screenshots\</div>
<div class="t" style="left:880.10px;top:510.13px;font-size:15.200px;line-height:15.200px;transform:scaleX(0.9550);transform-origin:0 0;color:#000;">1694</div>
<div class="t" style="left:965.20px;top:510.13px;font-size:15.200px;line-height:15.200px;transform:scaleX(0.9550);transform-origin:0 0;color:#000;">1261</div>
<div class="t" style="left:1060.00px;top:510.13px;font-size:15.200px;line-height:15.200px;transform:scaleX(0.9550);transform-origin:0 0;color:#000;">OK</div>
<svg class="b" style="left:7px;top:535px" width="16" height="16" viewBox="0 0 16 16"><rect x="0" y="0" width="16" height="16" rx="3" fill="#0f5fc4"/><path d="M4.2 8.3 L6.9 11 L12 5.6" stroke="#fff" stroke-width="1.3" fill="none"/></svg>
<div class="t" style="left:29.40px;top:536.13px;font-size:15.200px;line-height:15.200px;transform:scaleX(0.9550);transform-origin:0 0;color:#000;">256</div>
<svg class="b" style="left:91px;top:533px" width="17" height="20" viewBox="0 0 17 20"><path d="M0.5 0.5 H10.5 L15.5 5.5 V19.5 H0.5Z" fill="#fafafa" stroke="#777" stroke-width="1"/><path d="M10.5 0.5 V5.5 H15.5" fill="#fff" stroke="#999" stroke-width=".8"/><defs><linearGradient id="g" x1="0" y1="0" x2="0" y2="1"><stop offset="0" stop-color="#1f5fc9"/><stop offset="1" stop-color="#2aa3f2"/></linearGradient></defs><rect x="3.8" y="7.6" width="8.6" height="8" fill="url(#g)"/><path d="M3.8 15.6 L7.6 11 L10 13.5 L11 12.6 L12.4 15.6Z" fill="#4fc3f7"/><circle cx="10.6" cy="9.4" r=".9" fill="#e3f2fd"/></svg>
<div class="t" style="left:112.60px;top:536.13px;font-size:15.200px;line-height:15.200px;transform:scaleX(0.9550);transform-origin:0 0;color:#000;">Screenshot 2025-08-12 084334.png</div>
<div class="t" style="left:387.30px;top:536.13px;font-size:15.200px;line-height:15.200px;transform:scaleX(0.9575);transform-origin:0 0;color:#000;">Program Screenshot - 256.png</div>
<div class="t" style="left:631.40px;top:536.13px;font-size:15.200px;line-height:15.200px;transform:scaleX(0.9586);transform-origin:0 0;color:#000;">C:\Users\kj\Pictures\Screenshots\</div>
<div class="t" style="left:880.10px;top:536.13px;font-size:15.200px;line-height:15.200px;transform:scaleX(0.9550);transform-origin:0 0;color:#000;">1881</div>
<div class="t" style="left:965.20px;top:536.13px;font-size:15.200px;line-height:15.200px;transform:scaleX(0.9550);transform-origin:0 0;color:#000;">1004</div>
<div class="t" style="left:1060.00px;top:536.13px;font-size:15.200px;line-height:15.200px;transform:scaleX(0.9550);transform-origin:0 0;color:#000;">OK</div>
<svg class="b" style="left:7px;top:561px" width="16" height="16" viewBox="0 0 16 16"><rect x="0" y="0" width="16" height="16" rx="3" fill="#0f5fc4"/><path d="M4.2 8.3 L6.9 11 L12 5.6" stroke="#fff" stroke-width="1.3" fill="none"/></svg>
<div class="t" style="left:29.40px;top:562.13px;font-size:15.200px;line-height:15.200px;transform:scaleX(0.9550);transform-origin:0 0;color:#000;">257</div>
<svg class="b" style="left:91px;top:559px" width="17" height="20" viewBox="0 0 17 20"><path d="M0.5 0.5 H10.5 L15.5 5.5 V19.5 H0.5Z" fill="#fafafa" stroke="#777" stroke-width="1"/><path d="M10.5 0.5 V5.5 H15.5" fill="#fff" stroke="#999" stroke-width=".8"/><defs><linearGradient id="g" x1="0" y1="0" x2="0" y2="1"><stop offset="0" stop-color="#1f5fc9"/><stop offset="1" stop-color="#2aa3f2"/></linearGradient></defs><rect x="3.8" y="7.6" width="8.6" height="8" fill="url(#g)"/><path d="M3.8 15.6 L7.6 11 L10 13.5 L11 12.6 L12.4 15.6Z" fill="#4fc3f7"/><circle cx="10.6" cy="9.4" r=".9" fill="#e3f2fd"/></svg>
<div class="t" style="left:112.60px;top:562.13px;font-size:15.200px;line-height:15.200px;transform:scaleX(0.9550);transform-origin:0 0;color:#000;">Screenshot 2025-08-12 084655.png</div>
<div class="t" style="left:387.30px;top:562.13px;font-size:15.200px;line-height:15.200px;transform:scaleX(0.9575);transform-origin:0 0;color:#000;">Program Screenshot - 257.png</div>
<div class="t" style="left:631.40px;top:562.13px;font-size:15.200px;line-height:15.200px;transform:scaleX(0.9586);transform-origin:0 0;color:#000;">C:\Users\kj\Pictures\Screenshots\</div>
<div class="t" style="left:880.10px;top:562.13px;font-size:15.200px;line-height:15.200px;transform:scaleX(0.9550);transform-origin:0 0;color:#000;">1881</div>
<div class="t" style="left:965.20px;top:562.13px;font-size:15.200px;line-height:15.200px;transform:scaleX(0.9550);transform-origin:0 0;color:#000;">1004</div>
<div class="t" style="left:1060.00px;top:562.13px;font-size:15.200px;line-height:15.200px;transform:scaleX(0.9550);transform-origin:0 0;color:#000;">OK</div>
<svg class="b" style="left:7px;top:587px" width="16" height="16" viewBox="0 0 16 16"><rect x="0" y="0" width="16" height="16" rx="3" fill="#0f5fc4"/><path d="M4.2 8.3 L6.9 11 L12 5.6" stroke="#fff" stroke-width="1.3" fill="none"/></svg>
<div class="t" style="left:29.40px;top:588.13px;font-size:15.200px;line-height:15.200px;transform:scaleX(0.9550);transform-origin:0 0;color:#000;">258</div>
<svg class="b" style="left:91px;top:585px" width="17" height="20" viewBox="0 0 17 20"><path d="M0.5 0.5 H10.5 L15.5 5.5 V19.5 H0.5Z" fill="#fafafa" stroke="#777" stroke-width="1"/><path d="M10.5 0.5 V5.5 H15.5" fill="#fff" stroke="#999" stroke-width=".8"/><defs><linearGradient id="g" x1="0" y1="0" x2="0" y2="1"><stop offset="0" stop-color="#1f5fc9"/><stop offset="1" stop-color="#2aa3f2"/></linearGradient></defs><rect x="3.8" y="7.6" width="8.6" height="8" fill="url(#g)"/><path d="M3.8 15.6 L7.6 11 L10 13.5 L11 12.6 L12.4 15.6Z" fill="#4fc3f7"/><circle cx="10.6" cy="9.4" r=".9" fill="#e3f2fd"/></svg>
<div class="t" style="left:112.60px;top:588.13px;font-size:15.200px;line-height:15.200px;transform:scaleX(0.9550);transform-origin:0 0;color:#000;">Screenshot 2025-08-28 103041.png</div>
<div class="t" style="left:387.30px;top:588.13px;font-size:15.200px;line-height:15.200px;transform:scaleX(0.9575);transform-origin:0 0;color:#000;">Program Screenshot - 258.png</div>
<div class="t" style="left:631.40px;top:588.13px;font-size:15.200px;line-height:15.200px;transform:scaleX(0.9586);transform-origin:0 0;color:#000;">C:\Users\kj\Pictures\Screenshots\</div>
<div class="t" style="left:880.10px;top:588.13px;font-size:15.200px;line-height:15.200px;transform:scaleX(0.9550);transform-origin:0 0;color:#000;">2810</div>
<div class="t" style="left:965.20px;top:588.13px;font-size:15.200px;line-height:15.200px;transform:scaleX(0.9550);transform-origin:0 0;color:#000;">1604</div>
<div class="t" style="left:1060.00px;top:588.13px;font-size:15.200px;line-height:15.200px;transform:scaleX(0.9550);transform-origin:0 0;color:#000;">OK</div>
<svg class="b" style="left:7px;top:613px" width="16" height="16" viewBox="0 0 16 16"><rect x="0" y="0" width="16" height="16" rx="3" fill="#0f5fc4"/><path d="M4.2 8.3 L6.9 11 L12 5.6" stroke="#fff" stroke-width="1.3" fill="none"/></svg>
<div class="t" style="left:29.40px;top:614.13px;font-size:15.200px;line-height:15.200px;transform:scaleX(0.9550);transform-origin:0 0;color:#000;">259</div>
<svg class="b" style="left:91px;top:611px" width="17" height="20" viewBox="0 0 17 20"><path d="M0.5 0.5 H10.5 L15.5 5.5 V19.5 H0.5Z" fill="#fafafa" stroke="#777" stroke-width="1"/><path d="M10.5 0.5 V5.5 H15.5" fill="#fff" stroke="#999" stroke-width=".8"/><defs><linearGradient id="g" x1="0" y1="0" x2="0" y2="1"><stop offset="0" stop-color="#1f5fc9"/><stop offset="1" stop-color="#2aa3f2"/></linearGradient></defs><rect x="3.8" y="7.6" width="8.6" height="8" fill="url(#g)"/><path d="M3.8 15.6 L7.6 11 L10 13.5 L11 12.6 L12.4 15.6Z" fill="#4fc3f7"/><circle cx="10.6" cy="9.4" r=".9" fill="#e3f2fd"/></svg>
<div class="t" style="left:112.60px;top:614.13px;font-size:15.200px;line-height:15.200px;transform:scaleX(0.9550);transform-origin:0 0;color:#000;">Screenshot 2025-08-28 103254.png</div>
<div class="t" style="left:387.30px;top:614.13px;font-size:15.200px;line-height:15.200px;transform:scaleX(0.9575);transform-origin:0 0;color:#000;">Program Screenshot - 259.png</div>
<div class="t" style="left:631.40px;top:614.13px;font-size:15.200px;line-height:15.200px;transform:scaleX(0.9586);transform-origin:0 0;color:#000;">C:\Users\kj\Pictures\Screenshots\</div>
<div class="t" style="left:880.10px;top:614.13px;font-size:15.200px;line-height:15.200px;transform:scaleX(0.9550);transform-origin:0 0;color:#000;">2810</div>
<div class="t" style="left:965.20px;top:614.13px;font-size:15.200px;line-height:15.200px;transform:scaleX(0.9550);transform-origin:0 0;color:#000;">1604</div>
<div class="t" style="left:1060.00px;top:614.13px;font-size:15.200px;line-height:15.200px;transform:scaleX(0.9550);transform-origin:0 0;color:#000;">OK</div>
<svg class="b" style="left:7px;top:639px" width="16" height="16" viewBox="0 0 16 16"><rect x="0" y="0" width="16" height="16" rx="3" fill="#0f5fc4"/><path d="M4.2 8.3 L6.9 11 L12 5.6" stroke="#fff" stroke-width="1.3" fill="none"/></svg>
<div class="t" style="left:29.40px;top:640.13px;font-size:15.200px;line-height:15.200px;transform:scaleX(0.9550);transform-origin:0 0;color:#000;">260</div>
<svg class="b" style="left:91px;top:637px" width="17" height="20" viewBox="0 0 17 20"><path d="M0.5 0.5 H10.5 L15.5 5.5 V19.5 H0.5Z" fill="#fafafa" stroke="#777" stroke-width="1"/><path d="M10.5 0.5 V5.5 H15.5" fill="#fff" stroke="#999" stroke-width=".8"/><defs><linearGradient id="g" x1="0" y1="0" x2="0" y2="1"><stop offset="0" stop-color="#1f5fc9"/><stop offset="1" stop-color="#2aa3f2"/></linearGradient></defs><rect x="3.8" y="7.6" width="8.6" height="8" fill="url(#g)"/><path d="M3.8 15.6 L7.6 11 L10 13.5 L11 12.6 L12.4 15.6Z" fill="#4fc3f7"/><circle cx="10.6" cy="9.4" r=".9" fill="#e3f2fd"/></svg>
<div class="t" style="left:112.60px;top:640.13px;font-size:15.200px;line-height:15.200px;transform:scaleX(0.9550);transform-origin:0 0;color:#000;">Screenshot 2025-08-28 103355.png</div>
<div class="t" style="left:387.30px;top:640.13px;font-size:15.200px;line-height:15.200px;transform:scaleX(0.9575);transform-origin:0 0;color:#000;">Program Screenshot - 260.png</div>
<div class="t" style="left:631.40px;top:640.13px;font-size:15.200px;line-height:15.200px;transform:scaleX(0.9586);transform-origin:0 0;color:#000;">C:\Users\kj\Pictures\Screenshots\</div>
<div class="t" style="left:880.10px;top:640.13px;font-size:15.200px;line-height:15.200px;transform:scaleX(0.9550);transform-origin:0 0;color:#000;">2810</div>
<div class="t" style="left:965.20px;top:640.13px;font-size:15.200px;line-height:15.200px;transform:scaleX(0.9550);transform-origin:0 0;color:#000;">1604</div>
<div class="t" style="left:1060.00px;top:640.13px;font-size:15.200px;line-height:15.200px;transform:scaleX(0.9550);transform-origin:0 0;color:#000;">OK</div>
<svg class="b" style="left:7px;top:665px" width="16" height="16" viewBox="0 0 16 16"><rect x="0" y="0" width="16" height="16" rx="3" fill="#0f5fc4"/><path d="M4.2 8.3 L6.9 11 L12 5.6" stroke="#fff" stroke-width="1.3" fill="none"/></svg>
<div class="t" style="left:29.40px;top:666.13px;font-size:15.200px;line-height:15.200px;transform:scaleX(0.9550);transform-origin:0 0;color:#000;">261</div>
<svg class="b" style="left:91px;top:663px" width="17" height="20" viewBox="0 0 17 20"><path d="M0.5 0.5 H10.5 L15.5 5.5 V19.5 H0.5Z" fill="#fafafa" stroke="#777" stroke-width="1"/><path d="M10.5 0.5 V5.5 H15.5" fill="#fff" stroke="#999" stroke-width=".8"/><defs><linearGradient id="g" x1="0" y1="0" x2="0" y2="1"><stop offset="0" stop-color="#1f5fc9"/><stop offset="1" stop-color="#2aa3f2"/></linearGradient></defs><rect x="3.8" y="7.6" width="8.6" height="8" fill="url(#g)"/><path d="M3.8 15.6 L7.6 11 L10 13.5 L11 12.6 L12.4 15.6Z" fill="#4fc3f7"/><circle cx="10.6" cy="9.4" r=".9" fill="#e3f2fd"/></svg>
<div class="t" style="left:112.60px;top:666.13px;font-size:15.200px;line-height:15.200px;transform:scaleX(0.9550);transform-origin:0 0;color:#000;">Screenshot 2025-08-28 103439.png</div>
<div class="t" style="left:387.30px;top:666.13px;font-size:15.200px;line-height:15.200px;transform:scaleX(0.9575);transform-origin:0 0;color:#000;">Program Screenshot - 261.png</div>
<div class="t" style="left:631.40px;top:666.13px;font-size:15.200px;line-height:15.200px;transform:scaleX(0.9586);transform-origin:0 0;color:#000;">C:\Users\kj\Pictures\Screenshots\</div>
<div class="t" style="left:880.10px;top:666.13px;font-size:15.200px;line-height:15.200px;transform:scaleX(0.9550);transform-origin:0 0;color:#000;">2810</div>
<div class="t" style="left:965.20px;top:666.13px;font-size:15.200px;line-height:15.200px;transform:scaleX(0.9550);transform-origin:0 0;color:#000;">1604</div>
<div class="t" style="left:1060.00px;top:666.13px;font-size:15.200px;line-height:15.200px;transform:scaleX(0.9550);transform-origin:0 0;color:#000;">OK</div>
<svg class="b" style="left:7px;top:691px" width="16" height="16" viewBox="0 0 16 16"><rect x="0" y="0" width="16" height="16" rx="3" fill="#0f5fc4"/><path d="M4.2 8.3 L6.9 11 L12 5.6" stroke="#fff" stroke-width="1.3" fill="none"/></svg>
<div class="t" style="left:29.40px;top:692.13px;font-size:15.200px;line-height:15.200px;transform:scaleX(0.9550);transform-origin:0 0;color:#000;">262</div>
<svg class="b" style="left:91px;top:689px" width="17" height="20" viewBox="0 0 17 20"><path d="M0.5 0.5 H10.5 L15.5 5.5 V19.5 H0.5Z" fill="#fafafa" stroke="#777" stroke-width="1"/><path d="M10.5 0.5 V5.5 H15.5" fill="#fff" stroke="#999" stroke-width=".8"/><defs><linearGradient id="g" x1="0" y1="0" x2="0" y2="1"><stop offset="0" stop-color="#1f5fc9"/><stop offset="1" stop-color="#2aa3f2"/></linearGradient></defs><rect x="3.8" y="7.6" width="8.6" height="8" fill="url(#g)"/><path d="M3.8 15.6 L7.6 11 L10 13.5 L11 12.6 L12.4 15.6Z" fill="#4fc3f7"/><circle cx="10.6" cy="9.4" r=".9" fill="#e3f2fd"/></svg>
<div class="t" style="left:112.60px;top:692.13px;font-size:15.200px;line-height:15.200px;transform:scaleX(0.9550);transform-origin:0 0;color:#000;">Screenshot 2025-08-28 103520.png</div>
<div class="t" style="left:387.30px;top:692.13px;font-size:15.200px;line-height:15.200px;transform:scaleX(0.9575);transform-origin:0 0;color:#000;">Program Screenshot - 262.png</div>
<div class="t" style="left:631.40px;top:692.13px;font-size:15.200px;line-height:15.200px;transform:scaleX(0.9586);transform-origin:0 0;color:#000;">C:\Users\kj\Pictures\Screenshots\</div>
<div class="t" style="left:880.10px;top:692.13px;font-size:15.200px;line-height:15.200px;transform:scaleX(0.9550);transform-origin:0 0;color:#000;">1104</div>
<div class="t" style="left:965.20px;top:692.13px;font-size:15.200px;line-height:15.200px;transform:scaleX(0.9550);transform-origin:0 0;color:#000;">968</div>
<div class="t" style="left:1060.00px;top:692.13px;font-size:15.200px;line-height:15.200px;transform:scaleX(0.9550);transform-origin:0 0;color:#000;">OK</div>
<div class="b" style="left:1px;top:712px;width:1138px;height:26px;background:#0078d7"></div>
<svg class="b" style="left:7px;top:717px" width="16" height="16" viewBox="0 0 16 16"><rect x="0" y="0" width="16" height="16" rx="3" fill="#0a5cb3"/><path d="M4.2 8.3 L6.9 11 L12 5.6" stroke="#fff" stroke-width="1.3" fill="none"/></svg>
<div class="t" style="left:29.40px;top:718.13px;font-size:15.200px;line-height:15.200px;transform:scaleX(0.9550);transform-origin:0 0;color:#fff;">263</div>
<svg class="b" style="left:91px;top:715px" width="17" height="20" viewBox="0 0 17 20"><path d="M0.5 0.5 H10.5 L15.5 5.5 V19.5 H0.5Z" fill="#fafafa" stroke="#777" stroke-width="1"/><path d="M10.5 0.5 V5.5 H15.5" fill="#fff" stroke="#999" stroke-width=".8"/><defs><linearGradient id="g" x1="0" y1="0" x2="0" y2="1"><stop offset="0" stop-color="#1f5fc9"/><stop offset="1" stop-color="#2aa3f2"/></linearGradient></defs><rect x="3.8" y="7.6" width="8.6" height="8" fill="url(#g)"/><path d="M3.8 15.6 L7.6 11 L10 13.5 L11 12.6 L12.4 15.6Z" fill="#4fc3f7"/><circle cx="10.6" cy="9.4" r=".9" fill="#e3f2fd"/></svg>
<div class="t" style="left:112.60px;top:718.13px;font-size:15.200px;line-height:15.200px;transform:scaleX(0.9550);transform-origin:0 0;color:#fff;">Screenshot 2025-08-28 105920.png</div>
<div class="t" style="left:387.30px;top:718.13px;font-size:15.200px;line-height:15.200px;transform:scaleX(0.9575);transform-origin:0 0;color:#fff;">Program Screenshot - 263.png</div>
<div class="t" style="left:631.40px;top:718.13px;font-size:15.200px;line-height:15.200px;transform:scaleX(0.9586);transform-origin:0 0;color:#fff;">C:\Users\kj\Pictures\Screenshots\</div>
<div class="t" style="left:880.10px;top:718.13px;font-size:15.200px;line-height:15.200px;transform:scaleX(0.9550);transform-origin:0 0;color:#fff;">2254</div>
<div class="t" style="left:965.20px;top:718.13px;font-size:15.200px;line-height:15.200px;transform:scaleX(0.9550);transform-origin:0 0;color:#fff;">1060</div>
<div class="t" style="left:1060.00px;top:718.13px;font-size:15.200px;line-height:15.200px;transform:scaleX(0.9550);transform-origin:0 0;color:#fff;">OK</div>
<svg class="b" style="left:7px;top:743px" width="16" height="16" viewBox="0 0 16 16"><rect x="0" y="0" width="16" height="16" rx="3" fill="#0f5fc4"/><path d="M4.2 8.3 L6.9 11 L12 5.6" stroke="#fff" stroke-width="1.3" fill="none"/></svg>
<div class="t" style="left:29.40px;top:744.13px;font-size:15.200px;line-height:15.200px;transform:scaleX(0.9550);transform-origin:0 0;color:#000;">264</div>
<svg class="b" style="left:91px;top:741px" width="17" height="20" viewBox="0 0 17 20"><path d="M0.5 0.5 H10.5 L15.5 5.5 V19.5 H0.5Z" fill="#fafafa" stroke="#777" stroke-width="1"/><path d="M10.5 0.5 V5.5 H15.5" fill="#fff" stroke="#999" stroke-width=".8"/><defs><linearGradient id="g" x1="0" y1="0" x2="0" y2="1"><stop offset="0" stop-color="#1f5fc9"/><stop offset="1" stop-color="#2aa3f2"/></linearGradient></defs><rect x="3.8" y="7.6" width="8.6" height="8" fill="url(#g)"/><path d="M3.8 15.6 L7.6 11 L10 13.5 L11 12.6 L12.4 15.6Z" fill="#4fc3f7"/><circle cx="10.6" cy="9.4" r=".9" fill="#e3f2fd"/></svg>
<div class="t" style="left:112.60px;top:744.13px;font-size:15.200px;line-height:15.200px;transform:scaleX(0.9550);transform-origin:0 0;color:#000;">Screenshot 2025-08-28 110030.png</div>
<div class="t" style="left:387.30px;top:744.13px;font-size:15.200px;line-height:15.200px;transform:scaleX(0.9575);transform-origin:0 0;color:#000;">Program Screenshot - 264.png</div>
<div class="t" style="left:631.40px;top:744.13px;font-size:15.200px;line-height:15.200px;transform:scaleX(0.9586);transform-origin:0 0;color:#000;">C:\Users\kj\Pictures\Screenshots\</div>
<div class="t" style="left:880.10px;top:744.13px;font-size:15.200px;line-height:15.200px;transform:scaleX(0.9550);transform-origin:0 0;color:#000;">2810</div>
<div class="t" style="left:965.20px;top:744.13px;font-size:15.200px;line-height:15.200px;transform:scaleX(0.9550);transform-origin:0 0;color:#000;">1604</div>
<div class="t" style="left:1060.00px;top:744.13px;font-size:15.200px;line-height:15.200px;transform:scaleX(0.9550);transform-origin:0 0;color:#000;">OK</div>
<div class="b" style="left:0px;top:0px;width:1150px;height:27px;background:#fff"></div>
<div class="b" style="left:28px;top:1px;width:1px;height:26px;background:#e5e5e5"></div>
<div class="b" style="left:89px;top:1px;width:1px;height:26px;background:#e5e5e5"></div>
<div class="b" style="left:386px;top:1px;width:1px;height:26px;background:#e5e5e5"></div>
<div class="b" style="left:630px;top:1px;width:1px;height:26px;background:#e5e5e5"></div>
<div class="b" style="left:880px;top:1px;width:1px;height:26px;background:#e5e5e5"></div>
<div class="b" style="left:964px;top:1px;width:1px;height:26px;background:#e5e5e5"></div>
<div class="b" style="left:1060px;top:1px;width:1px;height:26px;background:#e5e5e5"></div>
<div class="b" style="left:1138px;top:1px;width:1px;height:26px;background:#e5e5e5"></div>
<div class="t" style="left:33.10px;top:7.73px;font-size:15.200px;line-height:15.200px;transform:scaleX(0.9550);transform-origin:0 0;">Index</div>
<div class="t" style="left:93.20px;top:7.73px;font-size:15.200px;line-height:15.200px;transform:scaleX(0.9550);transform-origin:0 0;">Filename</div>
<div class="t" style="left:391.20px;top:7.73px;font-size:15.200px;line-height:15.200px;transform:scaleX(0.9550);transform-origin:0 0;">New Filename</div>
<div class="t" style="left:635.30px;top:7.73px;font-size:15.200px;line-height:15.200px;transform:scaleX(0.9550);transform-origin:0 0;">Path</div>
<div class="t" style="left:884.60px;top:7.73px;font-size:15.200px;line-height:15.200px;transform:scaleX(0.9550);transform-origin:0 0;">Width</div>
<div class="t" style="left:969.70px;top:7.73px;font-size:15.200px;line-height:15.200px;transform:scaleX(0.9550);transform-origin:0 0;">Height</div>
<div class="t" style="left:1064.50px;top:7.73px;font-size:15.200px;line-height:15.200px;transform:scaleX(0.9550);transform-origin:0 0;">Error</div>
</div>
<div class="b" style="left:1626px;top:268px;width:20px;height:763px;background:#efefef"></div>
<div class="b" style="left:1634px;top:930px;width:3.5px;height:80px;background:#858585;border-radius:2px"></div></body></html>
